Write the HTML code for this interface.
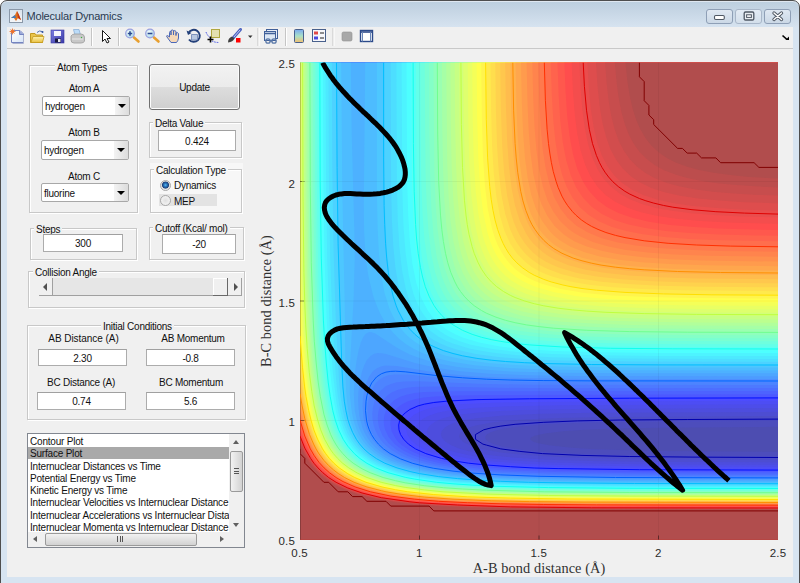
<!DOCTYPE html>
<html><head><meta charset="utf-8">
<style>
*{box-sizing:border-box}
html,body{margin:0;padding:0}
body{width:800px;height:583px;overflow:hidden;position:relative;background:#fff;font-family:"Liberation Sans",sans-serif;font-size:10px;letter-spacing:-0.25px;color:#111}
.abs{position:absolute}
#win{position:absolute;left:0;top:0;width:800px;height:600px;border:1px solid #4e4e4e;box-shadow:inset 0 1px 0 #dfe7f0;border-radius:7px 7px 0 0;background:linear-gradient(#bccfdf 0px,#c4d4e3 8px,#d5e2ef 25px,#d7e4f1 27px,#d7e4f1 600px);overflow:hidden}
#content{position:absolute;left:7px;top:27px;width:786px;height:550px;background:#f0f0f0}
#toolbar{position:absolute;left:0;top:0;width:786px;height:22px;background:#f0f0f0;border-bottom:1px solid #c9c9c9}
.title{position:absolute;left:25.5px;top:9px;font-size:11px;line-height:13px;color:#2a3a50;letter-spacing:-0.2px}
.wbtn{position:absolute;top:9px;height:15px;border:1px solid #8e9fb6;border-radius:3px;background:linear-gradient(#dfe8f2,#cbd8e6)}
.sep{position:absolute;top:28px;width:1px;height:19px;background:#c5c5c5;border-right:1px solid #fff}
.panel{position:absolute;border:1px solid #c8c8c8;box-shadow:inset 1px 1px 0 #fff, 1px 1px 0 #fff}
.ptitle{position:absolute;background:#f0f0f0;padding:0 2px;line-height:12px;margin-top:1px;white-space:nowrap}
.lbl{position:absolute;white-space:nowrap;text-align:center;line-height:12px;margin-top:1px}
.edit{position:absolute;background:#fff;border:1px solid #acacac;border-top-color:#a0a0a0;text-align:center;line-height:15px;padding-top:1px;white-space:nowrap}
.dd{position:absolute;background:#fff;border:1px solid #a8a8a8;border-radius:2px;line-height:19px;padding-left:2px;white-space:nowrap}
.dd .arr{position:absolute;right:0;top:0;width:14px;height:100%;background:linear-gradient(90deg,#f3f3f3,#dcdcdc)}
.dd .arr:after{content:"";position:absolute;left:3px;top:7px;border-left:4px solid transparent;border-right:4px solid transparent;border-top:4px solid #000}
.ytick{position:absolute;right:505px;text-align:right;color:#262626;font-size:11px;line-height:12px}
.xtick{position:absolute;width:40px;text-align:center;color:#262626;font-size:11px;line-height:12px}
</style></head><body>
<div id="win">
  <div class="title">Molecular Dynamics</div>
</div>
<!-- title icon -->
<div class="abs" style="left:9px;top:9px;width:14px;height:14px;border:1px solid #8a98a8;background:linear-gradient(#dbe4ee,#f4f6f8)">
<svg width="12" height="12" viewBox="0 0 12 12" style="position:absolute;left:0;top:0"><path d="M1 8 L5 5 L7 1 L9 5 L11 10 L8 8 L6 11 L4 8 Z" fill="#e0701c"/><path d="M1 8 L5 5 L6 8 L4 8Z" fill="#3d7bbf"/><path d="M7 1 L9 5 L11 10 L8 8Z" fill="#c23616"/></svg>
</div>
<!-- window buttons -->
<div class="wbtn" style="left:706px;width:27px"></div>
<div class="wbtn" style="left:735px;width:27px;border-color:#a9b7c9;background:linear-gradient(#e3ebf4,#d3dfeb)"></div>
<div class="wbtn" style="left:764px;width:27px"></div>
<svg class="abs" style="left:700px;top:0" width="100" height="27" viewBox="700 0 100 27">
<rect x="714.5" y="15.5" width="9.8" height="4" rx="1.2" fill="#fff" stroke="#4f5864" stroke-width="1.1"/>
<rect x="744.2" y="12" width="9.6" height="8" rx="1.3" fill="#e8ecf0" stroke="#4f5864" stroke-width="1.3"/>
<rect x="746.6" y="14.8" width="4.8" height="2.6" fill="#fff" stroke="#4f5864" stroke-width="1"/>
<path d="M774 13L781.5 19.5M781.5 13L774 19.5" stroke="#4f5864" stroke-width="3.4" stroke-linecap="round"/>
<path d="M774 13L781.5 19.5M781.5 13L774 19.5" stroke="#fff" stroke-width="1.4" stroke-linecap="round"/>
</svg>

<div id="content">
  <div id="toolbar"></div>
</div>
<svg class="abs" style="left:0;top:0" width="800" height="50" viewBox="0 0 800 50">
<defs>
<linearGradient id="gpage" x1="0" y1="0" x2="1" y2="1"><stop offset="0" stop-color="#ffffff"/><stop offset="1" stop-color="#d6e4f7"/></linearGradient>
<linearGradient id="gfold" x1="0" y1="0" x2="0" y2="1"><stop offset="0" stop-color="#fff3b0"/><stop offset="1" stop-color="#e9c040"/></linearGradient>
<linearGradient id="gdisk" x1="0" y1="0" x2="1" y2="1"><stop offset="0" stop-color="#7d7fe0"/><stop offset="1" stop-color="#3a3aa8"/></linearGradient>
<linearGradient id="gcbar" x1="0" y1="0" x2="0" y2="1"><stop offset="0" stop-color="#7aa9f0"/><stop offset="0.5" stop-color="#a8e0c8"/><stop offset="1" stop-color="#f3c070"/></linearGradient>
<radialGradient id="glens" cx="0.4" cy="0.4" r="0.6"><stop offset="0" stop-color="#ffffff"/><stop offset="1" stop-color="#a8d8e8"/></radialGradient>
</defs>
<!-- new -->
<path d="M11.5 30.5H20L23.5 34V42.5H11.5Z" fill="url(#gpage)" stroke="#7484c0" stroke-width="1"/>
<path d="M19.5 30.5V34.5H23.5" fill="#9aa8d8" stroke="#7484c0" stroke-width="1"/>
<path d="M23.5 35V43.5H12.5" fill="none" stroke="#aab2d0" stroke-width="1"/>
<circle cx="12.5" cy="31.5" r="2" fill="#f0a040"/><path d="M12.5 28.5V34.5M9.5 31.5H15.5M10.5 29.5L14.5 33.5M14.5 29.5L10.5 33.5" stroke="#e86a30" stroke-width="0.8"/>
<!-- open -->
<path d="M30.5 33.5H35L36 35H42.5V42.5H30.5Z" fill="#e9c44a" stroke="#c49a20" stroke-width="1"/>
<path d="M31 42.5L33 36.5H44L42.5 42.5Z" fill="url(#gfold)" stroke="#c49a20" stroke-width="0.8"/>
<path d="M37 32.5Q39.5 30 42 31.5" fill="none" stroke="#5070b0" stroke-width="1"/><circle cx="42.5" cy="32" r="1" fill="#3050a0"/>
<!-- save -->
<rect x="51" y="30" width="13" height="13" fill="url(#gdisk)" stroke="#3838a0" stroke-width="0.6"/>
<rect x="54" y="31" width="7" height="5" fill="#f4f4fc"/>
<rect x="55" y="38.5" width="6" height="4" fill="#1a1a40"/><rect x="58" y="39" width="2.5" height="3" fill="#e8e8f0"/>
<!-- print -->
<path d="M73.5 29.5H79L80.5 35H75Z" fill="#bcdcf8" stroke="#8ab0d8" stroke-width="0.8"/>
<path d="M71 36Q72 34 75 34H81Q84 34 84.5 37V41Q84 43 81 43H74Q71 43 71 40Z" fill="#c8c8c8" stroke="#9a9a9a" stroke-width="0.8"/>
<path d="M72 39H83" stroke="#e8e8e8" stroke-width="1"/><circle cx="81.5" cy="37.5" r="0.7" fill="#40b040"/>
<!-- separators -->
<path d="M91.5 28V46M118.5 28V46M258 28V46M285.5 28V46M333 28V46" stroke="#c5c5c5" stroke-width="1"/>
<path d="M92.5 28V46M119.5 28V46M259 28V46M286.5 28V46M334 28V46" stroke="#ffffff" stroke-width="1"/>
<!-- arrow cursor -->
<path d="M102.5 30.5V41.5L105 39L107 43L109 42L107 38.5H110.5Z" fill="#ffffff" stroke="#1a1a1a" stroke-width="1" stroke-linejoin="round"/>
<!-- zoom in -->
<path d="M134 37.5L138.5 41.5" stroke="#e8a030" stroke-width="2.6" stroke-linecap="round"/>
<circle cx="130" cy="33.5" r="4.3" fill="url(#glens)" stroke="#9aa0e0" stroke-width="1.2"/>
<path d="M127.8 33.5H132.2M130 31.3V35.7" stroke="#2a4a90" stroke-width="1.6"/>
<!-- zoom out -->
<path d="M154 37.5L158.5 41.5" stroke="#e8a030" stroke-width="2.6" stroke-linecap="round"/>
<circle cx="150" cy="33.5" r="4.3" fill="url(#glens)" stroke="#9aa0e0" stroke-width="1.2"/>
<path d="M147.6 33.5H152.4" stroke="#2a4a90" stroke-width="1.6"/>
<!-- hand -->
<path d="M171 42.5L167 37Q166 35.5 167.5 35.5L169.5 37V32.5Q169.5 31 171 31.5V35V30.5Q172.5 29.5 173.5 30.5V35V31Q175 30 176 31.5V35.5V33Q177.5 32 178.5 33.5V38Q178 41 176.5 42.5Z" fill="#f5d8b8" stroke="#4a68b8" stroke-width="1" stroke-linejoin="round"/>
<!-- rotate 3d -->
<path d="M188.5 33A6 6 0 1 1 189 39.5" fill="none" stroke="#23407a" stroke-width="2"/>
<path d="M186.5 30.5L188 35L191.5 33Z" fill="#23407a"/>
<path d="M191.5 34.5H197.5V40H191.5Z" fill="#b8c8e0" stroke="#6a80b0" stroke-width="0.8"/>
<!-- data cursor -->
<rect x="211.5" y="29.5" width="8" height="8" fill="#e4e0b0" stroke="#b0a840" stroke-width="1"/>
<path d="M206 32Q208 37 211 38M212 41Q215 42.5 219 42.5" fill="none" stroke="#3040e0" stroke-width="0.9" stroke-dasharray="1.5 1"/>
<path d="M210.5 36.5V42.5M207.5 39.5H213.5" stroke="#000" stroke-width="1.6"/>
<!-- brush -->
<path d="M233.5 37.5L240.5 29.5" stroke="#4860c0" stroke-width="3" stroke-linecap="round"/>
<path d="M233.8 37.2L240.2 29.8" stroke="#c8d0f0" stroke-width="1"/>
<path d="M228 42.5Q228 38 232 36.5L234.5 38.5Q233 42 228 42.5Z" fill="#404040"/>
<rect x="236" y="38" width="4.5" height="4.5" fill="#ff0000"/>
<path d="M248 35.5H252.5L250.25 38Z" fill="#303030"/>
<!-- link -->
<rect x="266.5" y="29.5" width="11" height="9" fill="#e8eef8" stroke="#40609a" stroke-width="1"/>
<rect x="264.5" y="31.5" width="11" height="9" fill="#dbe6f4" stroke="#40609a" stroke-width="1"/>
<path d="M264.5 33.5H275.5" stroke="#40609a" stroke-width="1.5"/>
<circle cx="268" cy="41" r="2.2" fill="none" stroke="#5a78a8" stroke-width="1.3"/><circle cx="274" cy="41" r="2.2" fill="none" stroke="#5a78a8" stroke-width="1.3"/><path d="M269.5 41H272.5" stroke="#5a78a8" stroke-width="1.3"/>
<!-- colorbar -->
<rect x="294.5" y="29.5" width="9" height="13" rx="1" fill="url(#gcbar)" stroke="#48608c" stroke-width="1"/>
<!-- legend -->
<rect x="312.5" y="29.5" width="13" height="12" fill="#f6f6fa" stroke="#48608c" stroke-width="1"/>
<rect x="314" y="31.5" width="4" height="3" fill="#e04848"/><rect x="314" y="36.5" width="4" height="3" fill="#4848e0"/>
<path d="M320 33H324M320 38H324" stroke="#202020" stroke-width="1"/>
<!-- gray square -->
<rect x="342" y="32" width="10" height="9" rx="1.5" fill="#a8a8a8" stroke="#909090" stroke-width="0.6"/>
<!-- plot tools -->
<rect x="360.5" y="30.5" width="12" height="11" fill="#ffffff" stroke="#2c4a8a" stroke-width="1.4"/>
<path d="M360.5 32H372.5" stroke="#2c4a8a" stroke-width="1.6"/><path d="M362.5 32V41.5M370.5 32V41.5" stroke="#6a86b8" stroke-width="1"/>
<!-- dock arrow -->
<path d="M782.5 35.5L787 39.5" stroke="#000" stroke-width="1.6"/><path d="M789 36.5V40H785.5Z" fill="#000"/>
</svg>

<!-- Atom Types panel -->
<div class="panel" style="left:29px;top:65px;width:109px;height:148px"></div>
<div class="ptitle" style="left:55px;top:61px">Atom Types</div>
<div class="lbl" style="left:44px;top:82px;width:80px">Atom A</div>
<div class="dd" style="left:42px;top:96px;width:88px;height:20px">hydrogen<div class="arr"></div></div>
<div class="lbl" style="left:44px;top:126px;width:80px">Atom B</div>
<div class="dd" style="left:41px;top:140px;width:88px;height:20px">hydrogen<div class="arr"></div></div>
<div class="lbl" style="left:44px;top:170px;width:80px">Atom C</div>
<div class="dd" style="left:41px;top:183px;width:88px;height:19px">fluorine<div class="arr"></div></div>

<!-- Update button -->
<div class="abs" style="left:149px;top:64px;width:91px;height:46px;border:1px solid #707070;border-radius:3px;background:linear-gradient(#f2f2f2 0%,#ebebeb 50%,#dddddd 50%,#cfcfcf 100%);box-shadow:inset 0 0 0 1px #fcfcfc"></div>
<div class="lbl" style="left:149px;top:81px;width:91px">Update</div>

<!-- Delta Value -->
<div class="panel" style="left:149px;top:122px;width:93px;height:36px"></div>
<div class="ptitle" style="left:153px;top:117px">Delta Value</div>
<div class="edit" style="left:158px;top:130px;width:78px;height:21px;line-height:19px">0.424</div>

<!-- Calculation Type -->
<div class="abs" style="left:150px;top:163px;width:93px;height:51px;background:#f7f7f7"></div>
<div class="panel" style="left:150px;top:169px;width:92px;height:44px"></div>
<div class="ptitle" style="left:154px;top:164px;background:#f7f7f7">Calculation Type</div>
<div class="abs" style="left:159px;top:194px;width:58px;height:12px;background:#e3e3e3"></div>
<div class="abs" style="left:159.5px;top:179.5px;width:11px;height:11px;border-radius:50%;border:1px solid #a8a8a8;background:radial-gradient(circle at 50% 45%,#5cc0f0 0,#2a78c0 1.5px,#1a3f78 3.2px,#d8d8d8 3.8px,#f2f2f2 5px)"></div>
<div class="abs" style="left:159.5px;top:195px;width:11px;height:11px;border-radius:50%;border:1px solid #a8a8a8;background:radial-gradient(circle at 50% 50%,#e0e0e0 0,#f4f4f4 5px)"></div>
<div class="lbl" style="left:174px;top:179px;text-align:left">Dynamics</div>
<div class="lbl" style="left:174px;top:195px;text-align:left">MEP</div>

<!-- Steps -->
<div class="panel" style="left:30px;top:228px;width:107px;height:32px"></div>
<div class="ptitle" style="left:34px;top:223px">Steps</div>
<div class="edit" style="left:43px;top:234px;width:80px;height:18px;line-height:16px">300</div>

<!-- Cutoff -->
<div class="panel" style="left:149px;top:227px;width:95px;height:33px"></div>
<div class="ptitle" style="left:153px;top:222px">Cutoff (Kcal/ mol)</div>
<div class="edit" style="left:162px;top:234px;width:74px;height:20px;line-height:18px">-20</div>

<!-- Collision Angle -->
<div class="panel" style="left:28px;top:271px;width:217px;height:37px"></div>
<div class="ptitle" style="left:33px;top:266px">Collision Angle</div>
<div class="abs" style="left:39px;top:278px;width:203px;height:18px;background:#e6e6e6;border-bottom:1px solid #a0a0a0"></div>
<div class="abs" style="left:39px;top:278px;width:14px;height:18px;background:#f0f0f0;border-right:1px solid #a0a0a0;border-bottom:1px solid #a0a0a0"></div>
<div class="abs" style="left:43px;top:283px;border-top:4px solid transparent;border-bottom:4px solid transparent;border-right:4px solid #505050"></div>
<div class="abs" style="left:213px;top:278px;width:15px;height:18px;background:#f0f0f0;border-right:1px solid #696969;border-bottom:1px solid #696969;box-shadow:inset 1px 1px 0 #fff"></div>
<div class="abs" style="left:228px;top:278px;width:14px;height:18px;background:#f0f0f0;border-right:1px solid #a0a0a0;border-bottom:1px solid #a0a0a0"></div>
<div class="abs" style="left:234px;top:283px;border-top:4px solid transparent;border-bottom:4px solid transparent;border-left:4px solid #505050"></div>

<!-- Initial Conditions -->
<div class="panel" style="left:27px;top:325px;width:219px;height:95px"></div>
<div class="ptitle" style="left:101px;top:320px">Initial Conditions</div>
<div class="lbl" style="left:38.5px;top:332px;width:90px;letter-spacing:-0.05px">AB Distance (A)</div>
<div class="lbl" style="left:148px;top:332px;width:90px">AB Momentum</div>
<div class="edit" style="left:38px;top:349px;width:89px;height:17px">2.30</div>
<div class="edit" style="left:146px;top:349px;width:89px;height:17px">-0.8</div>
<div class="lbl" style="left:36px;top:376px;width:90px">BC Distance (A)</div>
<div class="lbl" style="left:146px;top:376px;width:90px">BC Momentum</div>
<div class="edit" style="left:37px;top:392px;width:89px;height:18px;line-height:16px">0.74</div>
<div class="edit" style="left:146px;top:392px;width:89px;height:18px;line-height:16px">5.6</div>

<!-- Listbox -->
<div class="abs" style="left:27px;top:433px;width:218px;height:115px;background:#fff;border:1px solid #828790;overflow:hidden">
  <div class="abs" style="left:0;top:13px;width:201px;height:12px;background:#a9a9a9"></div>
  <div class="abs" style="left:2px;top:2px;width:199px;overflow:hidden;line-height:12.3px;letter-spacing:-0.2px;white-space:nowrap">Contour Plot<br>Surface Plot<br>Internuclear Distances vs Time<br>Potential Energy vs Time<br>Kinetic Energy vs Time<br>Internuclear Velocities vs Internuclear Distance<br>Internuclear Accelerations vs Internuclear Distance<br>Internuclear Momenta vs Internuclear Distance</div>
  <!-- vscroll -->
  <div class="abs" style="left:201px;top:0;width:15px;height:98px;background:#f0f0f0;border-left:1px solid #f0f0f0"></div>
  <div class="abs" style="left:205px;top:6px;border-left:3.5px solid transparent;border-right:3.5px solid transparent;border-bottom:4px solid #606060"></div>
  <div class="abs" style="left:202px;top:17px;width:13px;height:41px;border:1px solid #9a9a9a;border-radius:2px;background:linear-gradient(90deg,#f2f2f2,#e2e2e2 50%,#d2d2d2)"></div>
  <div class="abs" style="left:206px;top:34px;width:5px;height:6px;border-top:1px solid #555;border-bottom:1px solid #555"><div class="abs" style="left:0;top:1.5px;width:5px;height:1px;background:#555"></div></div>
  <div class="abs" style="left:205px;top:89px;border-left:3.5px solid transparent;border-right:3.5px solid transparent;border-top:4px solid #606060"></div>
  <!-- hscroll -->
  <div class="abs" style="left:0;top:98px;width:216px;height:15px;background:#f0f0f0"></div>
  <div class="abs" style="left:5px;top:102px;border-top:3.5px solid transparent;border-bottom:3.5px solid transparent;border-right:4px solid #606060"></div>
  <div class="abs" style="left:17px;top:99px;width:152px;height:13px;border:1px solid #9a9a9a;border-radius:2px;background:linear-gradient(#f2f2f2,#e2e2e2 50%,#d2d2d2)"></div>
  <div class="abs" style="left:89px;top:102px;width:6px;height:6px;border-left:1px solid #555;border-right:1px solid #555"><div class="abs" style="left:1.5px;top:0;width:1px;height:6px;background:#555"></div></div>
  <div class="abs" style="left:192px;top:102px;border-top:3.5px solid transparent;border-bottom:3.5px solid transparent;border-left:4px solid #606060"></div>
</div>

<svg class="abs" style="left:0;top:0" width="800" height="583" viewBox="0 0 800 583">
<defs><clipPath id="pc"><rect x="300" y="62.5" width="478" height="477"/></clipPath></defs>
<g clip-path="url(#pc)">
<rect x="300" y="62.5" width="478" height="477" fill="#4d4db1"/>
<path fill="#4d4dbc" fill-rule="evenodd" d="M301.2 539.5 778.0 539.5 778.0 451.8 662.1 451.0 620.2 450.1 590.1 448.9 568.9 447.5 549.0 445.3 537.1 442.9 533.6 441.7 531.4 440.5 530.3 439.3 530.5 438.1 531.8 436.9 534.5 435.8 544.8 433.4 562.9 431.3 584.9 429.8 616.3 428.6 657.3 427.8 778.0 426.8 778.0 62.5 300.0 62.5 300.0 539.5 301.2 539.5Z"/>
<path fill="#4d4dc7" fill-rule="evenodd" d="M301.2 539.5 778.0 539.5 778.0 456.4 628.6 455.3 583.2 454.1 549.2 452.4 523.1 450.1 501.9 446.5 493.7 444.1 488.5 441.7 485.7 439.3 485.0 436.9 486.6 434.6 490.7 432.2 497.2 430.1 503.8 428.6 522.3 426.1 549.8 424.0 586.4 422.6 631.0 421.8 778.0 420.9 778.0 62.5 300.0 62.5 300.0 539.5 301.2 539.5Z"/>
<path fill="#4d4dd2" fill-rule="evenodd" d="M301.2 539.5 778.0 539.5 778.0 459.7 678.8 459.3 610.7 458.6 562.3 457.2 528.2 455.3 500.7 452.4 486.7 450.1 476.8 447.7 469.8 445.3 463.0 441.7 460.4 439.3 459.2 436.9 459.0 435.8 459.8 433.4 460.7 432.2 463.7 429.8 468.9 427.4 475.7 425.4 494.8 422.0 522.3 419.6 559.3 418.0 608.3 417.0 778.0 416.0 778.0 62.5 300.0 62.5 300.0 539.5 301.2 539.5Z"/>
<path fill="#4d4dde" fill-rule="evenodd" d="M301.2 539.5 778.0 539.5 778.0 462.4 666.9 462.0 599.9 461.3 548.6 459.8 512.7 457.6 497.0 456.0 480.4 453.7 468.8 451.3 460.2 448.9 451.2 445.3 445.5 441.7 442.1 438.1 440.8 434.6 441.7 431.0 444.9 427.4 449.4 424.8 456.5 422.1 464.9 420.0 475.7 418.2 503.1 415.5 540.2 413.8 591.6 412.8 778.0 411.8 778.0 62.5 300.0 62.5 300.0 539.5 301.2 539.5Z"/>
<path fill="#4d4de9" fill-rule="evenodd" d="M301.2 539.5 778.0 539.5 778.0 464.8 660.9 464.4 590.4 463.6 537.8 462.0 501.1 459.6 484.0 457.7 469.7 455.5 456.5 452.6 447.0 449.7 439.5 446.5 432.1 441.7 428.1 436.9 427.1 434.6 426.8 432.2 427.7 428.6 430.4 425.0 435.5 421.4 442.2 418.6 449.4 416.5 460.1 414.5 486.4 411.7 523.5 410.0 576.0 408.9 778.0 407.9 778.0 62.5 300.0 62.5 300.0 539.5 301.2 539.5Z"/>
<path fill="#4d4df4" fill-rule="evenodd" d="M301.2 539.5 778.0 539.5 778.0 466.9 656.1 466.5 579.6 465.6 528.2 463.9 490.0 461.2 473.3 459.2 457.7 456.5 445.9 453.6 435.4 450.1 428.0 446.5 421.4 441.7 417.4 436.9 415.9 433.6 415.5 431.0 416.3 426.2 418.5 422.6 422.5 419.1 429.3 415.5 437.4 412.8 447.0 410.8 472.1 408.0 507.9 406.3 561.7 405.2 778.0 404.3 778.0 62.5 300.0 62.5 300.0 539.5 301.2 539.5Z"/>
<path fill="#4d4dff" fill-rule="evenodd" d="M301.2 539.5 778.0 539.5 778.0 468.8 651.3 468.4 576.0 467.5 519.9 465.6 481.6 462.8 464.9 460.6 448.2 457.5 435.0 453.9 425.5 450.2 416.8 445.3 411.3 440.5 407.3 434.6 405.9 428.6 406.6 423.8 409.3 419.1 413.5 415.1 419.1 411.9 425.5 409.5 435.0 407.1 445.8 405.5 458.9 404.2 492.4 402.7 546.2 401.7 778.0 400.8 778.0 62.5 300.0 62.5 300.0 539.5 301.2 539.5Z"/>
<path fill="#4d58ff" fill-rule="evenodd" d="M301.2 539.5 778.0 539.5 778.0 470.5 647.7 470.1 567.7 469.1 512.7 467.2 473.3 464.1 455.3 461.5 440.0 458.4 427.8 454.8 417.1 450.3 408.9 445.3 402.7 439.3 399.1 433.4 398.0 429.8 397.6 426.2 398.2 421.4 400.4 416.6 404.5 411.9 409.9 408.3 415.9 405.7 424.3 403.4 435.0 401.6 447.0 400.4 476.9 399.1 527.1 398.3 778.0 397.5 778.0 62.5 300.0 62.5 300.0 539.5 301.2 539.5Z"/>
<path fill="#4d63ff" fill-rule="evenodd" d="M301.2 539.5 778.0 539.5 778.0 472.1 639.4 471.7 561.7 470.7 506.7 468.7 484.0 467.1 466.1 465.3 449.4 462.8 433.8 459.5 420.7 455.4 409.9 450.5 401.6 444.9 398.1 441.7 395.2 438.1 391.5 431.0 390.3 423.8 391.0 417.9 393.0 413.1 396.7 408.3 401.6 404.5 407.5 401.5 414.7 399.3 423.7 397.6 435.0 396.4 456.5 395.4 491.2 395.0 778.0 394.3 778.0 62.5 300.0 62.5 300.0 539.5 301.2 539.5Z"/>
<path fill="#4d6eff" fill-rule="evenodd" d="M301.2 539.5 778.0 539.5 778.0 473.6 635.8 473.2 555.7 472.1 500.8 470.0 478.1 468.4 458.9 466.3 439.9 463.2 425.1 459.6 412.3 455.1 402.8 450.2 394.6 444.1 388.6 436.9 385.1 429.8 384.2 426.2 383.7 421.4 384.3 415.5 386.3 409.5 389.6 404.4 394.4 400.0 400.4 396.7 406.4 394.7 414.7 393.0 424.3 392.0 455.3 391.2 778.0 391.1 778.0 62.5 300.0 62.5 300.0 539.5 301.2 539.5Z"/>
<path fill="#4d79ff" fill-rule="evenodd" d="M301.2 539.5 778.0 539.5 778.0 475.0 632.2 474.5 549.8 473.4 493.6 471.2 469.7 469.3 451.8 467.1 435.0 464.2 419.5 460.3 407.5 455.9 396.7 450.1 388.4 443.3 382.6 435.8 379.1 427.4 378.1 422.6 377.8 417.9 378.3 411.9 380.1 405.8 383.2 400.0 387.2 395.6 392.0 392.3 398.0 389.8 405.2 388.1 413.5 387.1 433.8 386.6 498.4 387.8 555.7 388.2 778.0 388.1 778.0 62.5 300.0 62.5 300.0 539.5 301.2 539.5Z"/>
<path fill="#4d84ff" fill-rule="evenodd" d="M301.2 539.5 778.0 539.5 778.0 476.3 628.6 475.9 545.0 474.7 487.6 472.3 464.1 470.3 445.4 467.9 427.9 464.6 413.8 460.8 401.6 455.9 390.8 449.6 383.2 442.9 380.3 439.3 377.3 434.6 375.1 429.8 373.6 425.0 372.7 420.2 372.3 414.3 373.0 407.1 374.9 400.0 377.7 394.4 381.3 389.9 386.0 386.1 390.8 383.9 396.8 382.2 404.0 381.4 418.3 381.2 478.1 383.8 533.0 384.8 778.0 385.1 778.0 62.5 300.0 62.5 300.0 539.5 301.2 539.5Z"/>
<path fill="#4d8fff" fill-rule="evenodd" d="M301.2 539.5 778.0 539.5 778.0 477.5 626.2 477.1 541.4 475.9 510.3 474.9 482.8 473.4 461.0 471.5 441.0 468.9 423.7 465.6 407.4 460.8 394.4 455.0 385.1 448.9 377.7 441.5 374.4 436.9 371.8 432.2 369.9 427.4 368.3 421.4 367.3 410.7 367.7 403.6 369.3 395.8 371.8 389.2 375.3 383.5 378.9 379.9 383.7 376.9 388.4 375.3 394.4 374.4 407.5 374.6 443.4 377.9 467.3 379.6 517.5 381.4 596.4 382.1 778.0 382.1 778.0 62.5 300.0 62.5 300.0 539.5 301.2 539.5Z"/>
<path fill="#4d9bff" fill-rule="evenodd" d="M301.2 539.5 778.0 539.5 778.0 478.7 619.1 478.3 533.0 477.0 500.8 475.8 473.3 474.1 450.6 471.8 432.8 469.1 416.5 465.6 401.6 460.8 389.3 454.8 383.9 451.3 379.5 447.7 375.9 444.1 372.0 439.3 369.1 434.6 366.8 429.8 364.8 423.8 363.5 417.9 362.5 405.9 363.0 397.6 364.4 389.2 366.6 382.1 369.3 376.2 372.9 371.3 376.5 368.4 381.3 366.3 386.0 365.5 396.8 366.1 429.1 371.6 450.6 374.3 475.7 376.4 504.3 377.7 586.8 379.0 778.0 379.1 778.0 62.5 300.0 62.5 300.0 539.5 301.2 539.5Z"/>
<path fill="#4da6ff" fill-rule="evenodd" d="M301.2 539.5 778.0 539.5 778.0 479.8 616.7 479.4 529.4 478.1 497.2 476.9 469.7 475.1 447.0 472.8 429.1 470.0 410.0 465.6 396.5 460.8 384.9 454.8 379.8 451.3 375.3 447.4 371.1 442.9 367.6 438.1 364.8 433.4 362.3 427.4 359.2 415.5 358.1 401.2 358.4 391.6 359.8 381.3 361.7 372.5 364.1 365.4 366.9 360.0 370.5 355.9 374.1 353.8 377.7 353.1 381.3 353.2 386.0 354.0 415.0 363.0 435.9 367.8 460.1 371.3 490.0 373.7 527.1 375.2 576.0 375.9 778.0 376.2 778.0 62.5 300.0 62.5 300.0 539.5 301.2 539.5Z"/>
<path fill="#4db1ff" fill-rule="evenodd" d="M301.2 539.5 778.0 539.5 778.0 480.9 611.9 480.5 523.5 479.1 490.0 477.7 464.9 476.0 442.2 473.5 423.0 470.3 404.3 465.6 390.8 460.4 384.7 457.2 379.1 453.6 374.5 450.1 369.6 445.3 365.8 440.5 362.8 435.8 359.8 429.8 357.7 423.8 354.8 410.7 353.8 394.0 355.0 372.3 356.6 360.6 358.7 349.9 360.9 342.2 363.3 336.9 365.7 333.8 369.3 332.1 371.7 332.2 375.3 333.6 392.7 345.1 400.4 349.7 409.9 354.4 419.5 358.1 431.5 361.8 443.4 364.5 457.7 366.9 473.3 368.8 510.3 371.4 561.7 372.8 633.4 373.3 778.0 373.3 778.0 62.5 300.0 62.5 300.0 539.5 301.2 539.5Z"/>
<path fill="#4dbcff" fill-rule="evenodd" d="M301.2 539.5 778.0 539.5 778.0 482.0 646.5 481.7 567.1 481.1 511.5 479.8 468.5 477.5 450.6 475.8 433.8 473.6 419.5 471.1 406.6 467.9 395.7 464.4 386.0 460.1 377.7 455.2 371.1 450.1 366.3 445.3 362.6 440.5 359.0 434.6 356.2 428.4 353.8 421.4 351.9 413.1 349.9 395.2 349.9 367.8 353.6 298.6 354.7 259.3 354.4 233.0 351.7 134.0 350.8 62.5 300.0 62.5 300.0 539.5 301.2 539.5ZM599.9 370.2 778.0 370.4 778.0 62.5 365.2 62.5 363.8 205.6 364.1 230.6 365.3 252.1 366.6 264.0 368.6 277.1 373.3 296.2 376.3 304.6 379.9 312.9 383.8 320.1 388.6 327.2 393.6 333.2 399.7 339.2 405.8 343.9 413.5 348.7 421.9 352.8 430.3 356.0 439.8 358.9 450.6 361.4 474.5 365.2 505.5 367.8 545.0 369.4 599.9 370.2Z"/>
<path fill="#4dc7ff" fill-rule="evenodd" d="M301.2 539.5 778.0 539.5 778.0 483.0 645.4 482.7 566.5 482.1 510.3 480.8 467.3 478.5 448.2 476.8 432.6 474.8 418.3 472.2 405.4 469.1 394.3 465.6 384.8 461.5 376.5 456.8 369.1 451.3 364.3 446.5 359.8 440.7 356.0 434.6 353.3 428.6 350.8 421.4 348.8 413.1 347.3 403.6 346.2 392.8 345.4 372.5 344.8 309.3 342.3 191.3 341.2 62.5 300.0 62.5 300.0 539.5 301.2 539.5ZM558.1 366.6 632.2 367.4 778.0 367.6 778.0 62.5 376.9 62.5 376.9 193.7 377.6 227.1 378.9 253.3 381.2 274.8 384.5 292.7 389.3 308.2 392.5 315.3 395.7 321.3 399.8 327.2 404.8 333.2 409.9 338.0 415.9 342.6 422.0 346.3 429.2 349.9 437.4 353.1 445.8 355.7 466.1 360.1 490.0 363.2 519.9 365.3 558.1 366.6Z"/>
<path fill="#4dd2ff" fill-rule="evenodd" d="M301.2 539.5 778.0 539.5 778.0 483.9 641.8 483.7 562.9 483.0 506.7 481.7 464.9 479.4 445.8 477.7 430.3 475.6 415.9 473.1 404.0 470.2 393.0 466.8 382.5 462.3 373.7 457.2 366.9 452.1 362.1 447.4 357.4 441.4 353.3 434.6 350.1 427.4 347.7 420.2 345.5 410.7 343.8 400.0 342.6 388.1 340.7 348.7 337.5 236.6 336.4 163.9 335.8 62.5 300.0 62.5 300.0 539.5 301.2 539.5ZM595.2 364.2 778.0 364.7 778.0 62.5 384.4 62.5 384.7 192.5 385.6 227.1 387.2 254.5 390.1 278.3 393.9 296.2 396.6 304.6 399.6 311.7 402.6 317.7 406.4 323.7 411.2 329.6 416.0 334.4 421.9 339.2 429.1 343.7 436.2 347.2 444.6 350.5 462.5 355.4 485.2 359.1 512.7 361.6 548.6 363.3 595.2 364.2Z"/>
<path fill="#4ddeff" fill-rule="evenodd" d="M301.2 539.5 778.0 539.5 778.0 484.9 641.8 484.6 560.5 483.9 503.2 482.6 462.5 480.3 444.6 478.7 426.8 476.3 413.5 473.9 400.4 470.6 388.8 466.8 380.1 462.9 372.2 458.4 364.4 452.4 358.6 446.5 354.1 440.5 350.2 433.6 347.1 426.2 344.5 417.9 342.3 408.3 340.6 397.2 339.2 383.3 335.9 322.7 333.5 248.8 332.3 169.8 331.8 62.5 300.0 62.5 300.0 539.5 301.2 539.5ZM562.9 360.6 635.8 361.6 778.0 361.8 778.0 62.5 390.7 62.5 391.1 185.3 391.9 219.9 393.3 246.1 395.4 267.6 398.7 286.7 403.2 302.2 406.2 309.3 409.2 315.3 413.0 321.3 417.8 327.2 422.7 332.0 427.9 336.2 434.4 340.4 441.0 343.8 448.2 346.7 456.5 349.5 475.7 353.9 498.4 357.0 527.1 359.2 562.9 360.6Z"/>
<path fill="#4de9ff" fill-rule="evenodd" d="M301.2 539.5 778.0 539.5 778.0 485.8 639.4 485.5 558.1 484.8 501.2 483.5 460.1 481.2 426.7 477.4 412.3 474.9 398.7 471.5 387.8 467.9 378.9 464.1 370.5 459.3 362.9 453.6 356.9 447.7 351.6 440.5 347.6 433.4 344.2 425.0 341.7 416.7 339.4 405.9 337.4 392.8 335.9 377.6 332.3 318.9 330.1 254.5 328.9 175.8 328.4 62.5 300.0 62.5 300.0 539.5 301.2 539.5ZM594.0 358.3 659.7 358.8 778.0 358.9 778.0 62.5 396.4 62.5 396.9 186.5 397.8 221.1 399.4 247.3 402.0 270.0 405.8 289.1 408.4 297.4 411.1 304.6 417.5 316.5 421.9 322.5 426.7 327.6 431.8 332.0 438.6 336.7 445.5 340.4 453.0 343.5 470.1 348.7 491.2 352.6 517.5 355.3 551.0 357.2 594.0 358.3Z"/>
<path fill="#4df4ff" fill-rule="evenodd" d="M301.2 539.5 778.0 539.5 778.0 486.6 640.6 486.4 560.5 485.8 503.2 484.5 460.1 482.2 441.0 480.4 425.5 478.4 411.1 475.8 398.0 472.7 387.1 469.1 376.1 464.4 367.9 459.6 360.2 453.6 354.4 447.7 349.2 440.5 345.3 433.4 341.5 423.8 338.8 414.3 336.4 402.4 332.8 372.5 329.4 321.3 327.2 259.3 326.1 182.9 325.5 62.5 300.0 62.5 300.0 539.5 301.2 539.5ZM656.1 355.9 778.0 356.0 778.0 62.5 401.6 62.5 402.3 188.9 403.4 224.7 405.5 252.1 408.7 274.8 410.7 284.3 413.5 293.8 416.2 301.0 419.6 308.2 423.2 314.1 427.9 320.3 433.5 326.0 439.4 330.8 445.8 334.9 453.0 338.5 461.3 341.8 470.9 344.7 492.4 349.1 518.7 352.1 552.1 354.1 595.2 355.3 656.1 355.9Z"/>
<path fill="#4dffff" fill-rule="evenodd" d="M301.2 539.5 778.0 539.5 778.0 487.5 637.0 487.2 556.9 486.6 499.6 485.2 457.7 482.9 438.1 481.1 421.9 478.9 407.9 476.3 395.6 473.3 384.8 469.7 375.2 465.6 366.8 460.8 358.9 454.8 353.0 448.9 347.7 441.7 343.1 433.4 339.3 423.8 336.3 413.1 333.9 401.2 331.8 386.9 330.0 369.0 326.6 317.7 324.5 258.1 323.4 181.8 322.9 62.5 300.0 62.5 300.0 539.5 301.2 539.5ZM596.4 352.3 662.1 353.0 778.0 353.1 778.0 62.5 406.5 62.5 407.1 180.6 408.2 215.1 409.8 241.4 412.4 264.0 416.3 283.1 421.5 298.6 427.8 310.5 432.2 316.5 436.5 321.3 442.0 326.0 448.2 330.4 455.3 334.3 462.5 337.4 479.2 342.6 499.6 346.5 524.7 349.3 555.7 351.1 596.4 352.3Z"/>
<path fill="#58fff4" fill-rule="evenodd" d="M301.2 539.5 778.0 539.5 778.0 488.3 637.0 488.1 554.5 487.4 497.2 486.0 455.3 483.7 438.6 482.1 421.5 479.9 407.5 477.4 393.6 473.9 382.5 470.2 372.1 465.6 364.1 460.8 356.5 454.8 350.7 448.9 345.4 441.6 341.0 433.4 337.0 423.3 334.2 413.1 331.5 400.0 329.5 385.7 327.5 367.1 324.1 317.7 322.1 259.3 321.1 182.9 320.6 62.5 300.0 62.5 300.0 539.5 301.2 539.5ZM645.4 349.9 778.0 350.2 778.0 62.5 411.3 62.5 412.0 182.9 413.2 217.5 415.2 245.0 418.3 267.6 422.6 285.5 425.6 293.8 428.8 301.0 432.3 307.0 436.5 312.9 441.0 317.9 447.0 323.2 453.0 327.4 460.1 331.3 468.5 334.9 476.9 337.7 497.2 342.4 521.1 345.5 552.1 347.8 591.6 349.2 645.4 349.9Z"/>
<path fill="#63ffe9" fill-rule="evenodd" d="M301.2 539.5 778.0 539.5 778.0 489.1 637.0 488.9 555.0 488.2 499.6 486.9 456.1 484.6 437.4 482.9 420.7 480.8 406.4 478.2 393.2 475.0 382.4 471.5 371.4 466.8 363.2 462.0 355.4 456.0 349.0 449.5 343.4 441.7 339.0 433.4 335.2 423.8 332.2 413.1 329.5 400.0 327.2 384.5 325.2 365.4 321.9 317.7 320.0 260.5 318.9 185.3 318.5 62.5 300.0 62.5 300.0 539.5 301.2 539.5ZM601.1 346.3 665.7 347.1 778.0 347.3 778.0 62.5 415.9 62.5 416.6 175.8 417.6 210.4 419.4 236.6 422.1 259.3 425.8 277.1 431.0 292.7 437.3 304.6 441.7 310.5 446.1 315.3 451.5 320.1 457.7 324.5 463.7 327.8 470.9 331.0 487.6 336.4 507.8 340.4 531.8 343.1 561.7 345.1 601.1 346.3Z"/>
<path fill="#6effde" fill-rule="evenodd" d="M301.2 539.5 778.0 539.5 778.0 489.9 634.6 489.6 554.5 489.0 497.2 487.7 454.2 485.4 433.9 483.5 418.3 481.4 403.6 478.7 390.8 475.5 380.1 471.9 370.5 467.8 360.9 462.2 353.8 456.6 348.4 451.3 343.7 445.3 339.4 438.1 335.9 430.6 332.6 421.4 330.0 411.9 325.7 388.1 323.3 366.6 321.3 341.5 319.6 311.7 318.4 278.3 317.0 196.1 316.5 62.5 300.0 62.5 300.0 539.5 301.2 539.5ZM648.9 343.9 778.0 344.3 778.0 62.5 420.3 62.5 420.6 132.9 421.2 179.4 422.5 213.9 424.5 240.2 427.8 262.8 432.3 280.7 434.9 287.9 438.1 295.0 441.6 301.0 445.8 307.0 450.1 311.7 455.4 316.5 461.3 320.8 468.5 324.9 475.7 328.1 484.0 331.1 493.6 333.7 504.3 336.0 528.2 339.4 558.1 341.7 596.4 343.1 648.9 343.9Z"/>
<path fill="#79ffd2" fill-rule="evenodd" d="M301.2 539.5 778.0 539.5 778.0 490.6 633.4 490.4 551.0 489.7 492.4 488.3 451.8 486.0 435.0 484.5 417.9 482.3 404.0 479.8 389.7 476.3 378.9 472.7 368.0 467.9 359.9 463.2 352.2 457.2 346.6 451.6 341.8 445.3 337.5 438.1 333.7 429.8 330.8 421.4 327.9 410.7 323.6 385.7 321.2 364.2 319.1 338.2 316.5 278.3 315.2 198.4 314.7 62.5 300.0 62.5 300.0 539.5 301.2 539.5ZM610.7 340.4 672.8 341.1 778.0 341.3 778.0 62.5 424.7 62.5 425.5 172.2 426.7 205.6 428.5 231.8 431.3 254.5 435.2 272.4 440.1 286.7 443.4 293.5 447.0 299.4 451.8 305.7 456.5 310.5 461.3 314.6 467.3 318.7 473.3 322.0 480.4 325.2 497.2 330.5 517.2 334.4 541.4 337.2 571.3 339.1 610.7 340.4Z"/>
<path fill="#84ffc7" fill-rule="evenodd" d="M301.2 539.5 778.0 539.5 778.0 491.4 634.6 491.1 552.1 490.5 494.8 489.2 450.6 486.8 430.3 484.8 414.7 482.7 399.7 479.9 387.2 476.7 375.7 472.7 365.7 468.1 357.5 463.2 350.2 457.3 344.3 451.3 339.9 445.3 335.7 438.1 331.9 429.8 328.7 420.3 326.2 410.7 323.8 398.8 321.5 383.3 319.1 361.4 317.2 336.8 314.7 276.0 313.4 194.9 312.9 62.5 300.0 62.5 300.0 539.5 301.2 539.5ZM663.3 338.0 778.0 338.3 778.0 62.5 429.1 62.5 429.3 130.5 430.1 175.8 431.4 209.2 433.5 235.4 436.9 258.1 441.6 276.0 444.3 283.1 447.7 290.3 451.3 296.2 455.8 302.2 460.3 307.0 466.1 311.9 473.1 316.5 480.0 320.1 487.6 323.2 496.3 326.0 516.3 330.5 540.2 333.6 571.3 335.9 610.7 337.2 663.3 338.0Z"/>
<path fill="#8fffbc" fill-rule="evenodd" d="M301.2 539.5 778.0 539.5 778.0 492.1 631.0 491.9 549.8 491.2 491.2 489.8 449.4 487.5 431.5 485.8 413.8 483.5 400.4 481.0 386.3 477.5 375.3 473.8 365.0 469.1 357.0 464.4 349.3 458.4 343.4 452.4 338.0 445.3 333.5 437.2 329.9 428.9 326.7 419.1 323.9 407.9 321.5 395.0 319.4 379.7 317.2 359.4 315.5 335.6 313.0 276.0 311.8 197.3 311.3 62.5 300.0 62.5 300.0 539.5 301.2 539.5ZM626.2 334.4 684.8 335.0 778.0 335.3 778.0 62.5 433.4 62.5 434.3 169.8 435.5 202.0 437.4 228.3 440.3 249.7 444.3 267.6 449.5 281.9 453.0 288.7 456.5 294.4 460.8 299.8 465.5 304.6 470.9 309.1 476.9 313.0 483.3 316.5 491.2 319.8 507.9 324.8 528.2 328.6 553.3 331.4 584.4 333.2 626.2 334.4Z"/>
<path fill="#9bffb1" fill-rule="evenodd" d="M301.2 539.5 778.0 539.5 778.0 492.8 632.2 492.6 548.6 491.9 492.3 490.6 448.5 488.2 430.3 486.5 413.5 484.3 399.2 481.7 386.0 478.4 375.3 474.9 364.5 470.2 355.0 464.6 347.8 458.9 341.8 452.8 337.0 446.4 332.3 438.2 328.6 429.8 325.1 419.2 322.4 408.3 319.9 395.2 317.8 379.7 315.5 358.4 313.8 334.4 311.4 276.0 310.2 196.1 309.7 62.5 300.0 62.5 300.0 539.5 301.2 539.5ZM699.1 332.0 778.0 332.2 778.0 62.5 437.6 62.5 438.0 129.3 438.8 174.6 440.3 208.0 442.8 234.2 446.4 255.7 448.9 265.2 451.7 273.6 454.8 280.7 458.7 287.9 462.8 293.8 467.3 299.0 473.3 304.5 479.2 308.7 486.4 312.8 493.6 316.0 502.0 318.9 511.5 321.6 533.0 325.6 559.8 328.4 594.0 330.3 638.2 331.5 699.1 332.0Z"/>
<path fill="#a6ffa6" fill-rule="evenodd" d="M301.2 539.5 778.0 539.5 778.0 493.5 632.2 493.3 549.8 492.6 491.2 491.3 448.2 489.0 427.9 487.1 411.1 484.8 396.8 482.1 383.7 478.8 372.9 475.1 362.3 470.3 354.3 465.6 346.6 459.6 340.8 453.6 335.4 446.5 330.6 438.1 326.6 428.6 323.2 417.9 320.4 405.9 317.9 392.1 315.8 376.1 313.7 354.7 312.0 329.6 309.8 272.4 308.7 193.7 308.3 62.5 300.0 62.5 300.0 539.5 301.2 539.5ZM650.1 328.4 778.0 329.1 778.0 62.5 441.9 62.5 442.2 124.5 443.0 167.4 444.3 199.6 446.4 225.9 449.6 247.3 454.2 265.2 456.8 272.4 460.1 279.5 463.5 285.5 467.3 290.9 472.0 296.2 476.9 300.7 482.8 305.1 488.8 308.6 496.0 312.0 504.3 315.2 522.3 319.8 543.8 323.3 571.3 325.8 604.7 327.4 650.1 328.4Z"/>
<path fill="#b1ff9b" fill-rule="evenodd" d="M301.2 539.5 778.0 539.5 778.0 494.2 629.8 493.9 546.2 493.3 487.6 491.9 445.8 489.5 427.9 487.8 411.1 485.6 396.8 483.0 383.6 479.8 372.9 476.2 362.2 471.5 353.8 466.7 345.4 460.2 339.0 453.6 333.7 446.5 329.1 438.1 325.1 428.7 321.7 417.9 319.1 407.0 316.6 392.8 314.3 376.1 312.2 354.7 310.6 332.0 308.4 272.9 307.3 193.7 306.9 62.5 300.0 62.5 300.0 539.5 301.2 539.5ZM631.0 324.9 688.4 325.6 778.0 325.9 778.0 62.5 446.2 62.5 447.2 162.7 448.5 194.9 450.4 219.9 453.4 241.4 457.6 259.3 463.0 273.6 469.7 285.1 473.7 290.3 478.4 295.0 484.0 299.7 489.5 303.4 496.0 306.9 503.2 310.0 519.9 315.2 539.2 318.9 562.9 321.7 592.8 323.6 631.0 324.9Z"/>
<path fill="#bcff8f" fill-rule="evenodd" d="M301.2 539.5 778.0 539.5 778.0 494.8 629.8 494.6 547.4 494.0 488.8 492.6 445.8 490.3 425.5 488.3 408.7 486.1 394.8 483.5 381.3 480.0 370.3 476.3 359.8 471.5 351.8 466.8 344.2 460.8 338.2 454.7 332.3 446.7 327.5 438.1 323.9 429.4 320.3 418.1 317.5 405.9 314.8 390.4 312.6 373.7 310.8 354.1 309.1 329.6 307.0 272.4 305.9 194.9 305.5 62.5 300.0 62.5 300.0 539.5 301.2 539.5ZM701.5 322.5 778.0 322.7 778.0 62.5 450.4 62.5 450.8 124.5 451.7 167.4 453.3 199.6 455.6 224.7 459.3 246.1 461.8 255.7 464.6 264.0 467.7 271.2 471.6 278.3 475.7 284.1 479.9 289.1 485.2 294.0 491.2 298.5 497.5 302.2 505.0 305.8 512.7 308.6 522.3 311.4 543.8 315.7 570.1 318.7 602.3 320.6 644.2 321.8 701.5 322.5Z"/>
<path fill="#c7ff84" fill-rule="evenodd" d="M301.2 539.5 778.0 539.5 778.0 495.5 629.8 495.2 545.0 494.6 485.2 493.2 443.4 490.8 425.5 489.1 408.7 486.9 393.2 484.0 380.1 480.6 368.1 476.5 358.6 472.1 349.8 466.8 342.4 460.8 335.9 453.8 330.6 446.5 326.1 438.1 321.8 427.4 318.3 415.5 315.5 403.1 313.1 388.1 310.9 370.2 307.6 326.0 305.6 270.0 304.6 193.7 304.2 62.5 300.0 62.5 300.0 539.5 301.2 539.5ZM669.3 318.9 778.0 319.4 778.0 62.5 454.7 62.5 455.1 122.1 456.0 163.9 457.4 194.9 459.8 219.9 463.3 241.4 468.0 258.1 473.7 271.2 477.3 277.1 481.6 282.9 486.4 288.0 491.9 292.7 497.2 296.3 504.3 300.2 511.6 303.4 519.9 306.3 537.8 310.7 560.5 314.1 588.0 316.4 622.7 318.0 669.3 318.9Z"/>
<path fill="#d2ff79" fill-rule="evenodd" d="M301.2 539.5 778.0 539.5 778.0 496.1 631.0 495.9 547.4 495.3 488.8 494.0 444.6 491.6 424.3 489.7 407.5 487.5 392.4 484.6 380.1 481.5 368.1 477.5 357.6 472.7 349.6 467.9 341.8 461.9 335.1 454.8 329.9 447.7 325.1 439.1 320.8 428.6 317.2 416.7 314.3 403.7 311.9 389.2 309.6 370.1 306.3 326.0 304.4 270.0 303.4 193.7 303.0 62.5 300.0 62.5 300.0 539.5 301.2 539.5ZM654.9 315.3 778.0 316.1 778.0 62.5 459.0 62.5 459.4 119.7 460.2 159.1 461.7 190.1 463.8 213.9 466.9 234.2 471.0 250.9 476.7 265.2 480.0 271.2 484.1 277.1 488.8 282.7 493.6 287.1 499.3 291.5 505.1 295.0 518.7 301.1 536.6 306.2 556.9 309.7 583.2 312.5 614.3 314.2 654.9 315.3Z"/>
<path fill="#deff6e" fill-rule="evenodd" d="M301.2 539.5 778.0 539.5 778.0 496.7 627.4 496.5 542.6 495.8 482.8 494.4 441.0 492.0 423.1 490.3 406.4 488.0 390.8 485.1 377.7 481.7 365.7 477.6 356.2 473.1 347.7 467.9 340.2 462.0 333.5 454.8 328.4 447.7 323.8 439.3 319.5 428.6 315.9 416.7 313.0 403.6 310.5 388.1 308.2 369.0 305.4 332.0 303.5 285.5 302.3 205.6 301.8 62.5 300.0 62.5 300.0 539.5 301.2 539.5ZM648.9 311.7 700.3 312.5 778.0 312.8 778.0 62.5 463.3 62.5 463.7 116.2 464.6 155.5 466.0 186.5 468.1 210.4 471.2 230.6 475.3 247.3 481.0 261.6 487.6 272.7 492.3 278.3 497.2 283.1 502.0 286.9 507.9 290.7 521.1 297.0 537.8 302.1 557.1 305.8 582.0 308.6 611.9 310.5 648.9 311.7Z"/>
<path fill="#e9ff63" fill-rule="evenodd" d="M301.2 539.5 778.0 539.5 778.0 497.3 628.6 497.1 545.0 496.5 486.4 495.2 442.2 492.8 421.9 490.9 405.2 488.6 390.3 485.8 377.7 482.6 366.0 478.7 355.6 473.9 347.6 469.1 339.4 462.8 333.0 456.0 327.0 447.7 322.5 439.3 318.2 428.6 314.7 416.7 311.8 403.6 309.1 386.9 306.8 367.8 303.9 327.2 302.1 276.0 301.1 198.4 300.7 62.5 300.0 62.5 300.0 539.5 301.2 539.5ZM776.8 309.3 778.0 309.4 778.0 62.5 467.7 62.5 468.3 123.3 469.4 165.1 471.4 196.1 474.5 221.1 476.6 231.8 479.0 241.4 481.8 249.7 485.3 258.1 489.3 265.2 493.6 271.3 498.9 277.1 504.3 281.9 510.3 286.1 517.5 290.1 525.9 293.7 534.2 296.5 554.5 301.2 579.6 304.6 609.5 306.8 648.9 308.2 700.3 309.0 776.8 309.3Z"/>
<path fill="#f4ff58" fill-rule="evenodd" d="M301.2 539.5 778.0 539.5 778.0 497.9 553.3 497.2 496.0 496.1 453.0 494.2 417.1 491.0 402.8 489.0 389.6 486.5 377.5 483.5 366.9 480.0 358.2 476.3 349.4 471.5 342.5 466.8 335.8 460.8 329.9 454.0 324.9 446.5 320.3 437.4 316.7 428.0 313.4 416.7 310.6 403.6 308.2 389.2 306.0 370.8 302.9 329.6 301.0 278.3 300.0 206.3 300.0 539.5 301.2 539.5ZM745.7 305.8 778.0 305.9 778.0 62.5 472.2 62.5 472.7 119.7 473.8 160.3 475.7 191.3 478.5 215.1 482.7 235.4 485.3 243.8 488.6 252.1 492.3 259.3 496.1 265.2 500.8 270.9 505.5 275.7 511.5 280.4 517.7 284.3 524.8 287.9 533.0 291.1 551.0 296.1 573.7 299.9 601.1 302.5 635.8 304.2 681.2 305.3 745.7 305.8Z"/>
<path fill="#ffff4d" fill-rule="evenodd" d="M301.2 539.5 778.0 539.5 778.0 498.5 561.7 497.9 505.5 497.0 463.7 495.5 429.0 493.0 400.4 489.3 388.6 487.0 377.7 484.3 367.4 481.1 358.6 477.5 350.2 473.2 343.0 468.4 336.7 463.2 331.0 457.2 326.3 450.9 321.6 442.9 317.9 434.6 314.3 424.3 311.4 413.1 308.8 400.0 304.8 370.2 301.9 332.0 300.0 282.4 300.0 539.5 301.2 539.5ZM743.3 302.2 778.0 302.3 778.0 62.5 476.6 62.5 477.2 118.5 478.3 157.9 480.3 188.9 483.2 212.8 487.6 233.0 490.2 241.4 493.1 248.5 496.8 255.7 500.7 261.6 505.5 267.6 510.3 272.3 516.3 277.0 522.2 280.7 529.3 284.3 536.6 287.2 554.5 292.3 577.3 296.2 603.5 298.8 638.2 300.6 682.4 301.7 743.3 302.2Z"/>
<path fill="#fff44d" fill-rule="evenodd" d="M301.2 539.5 778.0 539.5 778.0 499.1 570.1 498.5 514.4 497.8 472.1 496.5 435.0 494.2 407.5 491.1 384.8 487.0 374.1 484.1 364.5 480.9 356.2 477.3 347.8 472.8 340.7 467.9 335.2 463.2 329.6 457.2 324.4 450.1 320.4 442.9 316.7 434.6 313.4 425.0 310.8 415.3 308.3 403.6 305.9 389.2 302.4 356.2 300.0 315.6 300.0 539.5 301.2 539.5ZM757.7 298.6 778.0 298.7 778.0 62.5 481.2 62.5 481.8 116.2 482.9 155.5 484.9 185.3 487.8 209.2 492.2 229.5 494.8 237.8 497.7 245.0 501.4 252.1 505.3 258.1 510.1 264.0 515.1 268.9 521.1 273.5 527.1 277.2 534.2 280.8 542.6 284.1 560.8 289.1 584.4 292.9 611.9 295.4 647.7 297.1 693.2 298.1 757.7 298.6Z"/>
<path fill="#ffe94d" fill-rule="evenodd" d="M301.2 539.5 778.0 539.5 778.0 499.6 572.5 499.1 517.5 498.4 475.7 497.2 441.0 495.3 411.1 492.3 387.1 488.2 368.1 483.1 359.7 479.9 351.4 475.9 344.0 471.5 337.6 466.8 331.3 460.8 326.4 454.8 321.7 447.7 318.0 440.5 314.6 432.2 311.5 422.6 308.9 411.9 306.5 400.0 302.7 371.4 300.0 336.9 300.0 539.5 301.2 539.5ZM666.9 293.9 778.0 295.0 778.0 62.5 485.8 62.5 486.4 111.4 487.3 147.2 488.9 174.6 491.2 197.3 494.5 216.3 498.7 231.8 504.3 245.3 507.6 250.9 511.5 256.5 516.1 261.6 521.1 266.3 531.8 273.6 544.9 279.5 560.5 284.2 579.6 287.9 602.3 290.6 631.0 292.6 666.9 293.9Z"/>
<path fill="#ffde4d" fill-rule="evenodd" d="M301.2 539.5 778.0 539.5 778.0 500.2 573.7 499.7 517.5 499.0 476.9 497.8 441.0 495.9 412.3 493.1 389.3 489.4 370.5 484.7 360.9 481.3 352.6 477.6 345.4 473.6 339.0 469.1 333.4 464.4 327.9 458.4 323.4 452.4 319.2 445.3 315.5 437.6 312.2 428.6 307.2 409.1 303.2 384.5 300.0 352.6 300.0 539.5 301.2 539.5ZM681.2 290.3 778.0 291.2 778.0 62.5 490.5 62.5 491.1 110.2 492.1 146.0 493.8 173.4 496.3 196.1 499.8 215.1 504.3 230.6 510.3 243.8 517.5 254.2 526.3 262.8 531.8 266.9 537.8 270.5 544.2 273.6 552.1 276.6 568.9 281.3 589.2 284.8 613.1 287.3 643.0 289.1 681.2 290.3Z"/>
<path fill="#ffd24d" fill-rule="evenodd" d="M301.2 539.5 778.0 539.5 778.0 500.7 576.0 500.3 522.3 499.6 480.4 498.5 443.4 496.7 415.8 494.2 392.0 490.6 372.9 486.2 364.4 483.5 355.5 479.9 347.8 476.0 340.7 471.5 334.7 466.8 329.7 462.0 324.7 456.0 320.3 449.5 316.7 442.8 313.2 434.6 307.8 416.7 303.4 394.0 300.0 364.8 300.0 539.5 301.2 539.5ZM702.7 286.7 778.0 287.3 778.0 62.5 495.3 62.5 495.9 110.2 497.0 144.8 498.8 172.2 501.4 194.9 505.2 213.9 510.2 229.4 513.4 236.6 516.7 242.6 520.9 248.5 524.7 253.0 529.4 257.6 534.6 261.6 540.2 265.2 547.1 268.8 561.7 274.3 579.6 278.6 601.1 281.8 627.4 284.1 659.7 285.7 702.7 286.7Z"/>
<path fill="#ffc74d" fill-rule="evenodd" d="M301.2 539.5 778.0 539.5 778.0 501.3 578.4 500.8 523.5 500.2 482.8 499.2 449.4 497.7 420.7 495.3 395.6 492.0 376.5 487.9 366.9 485.1 358.6 482.1 351.0 478.7 343.0 474.2 337.0 470.0 331.1 464.8 326.2 459.6 321.7 453.6 317.9 447.4 314.3 440.0 310.8 431.0 308.3 422.6 303.6 401.2 300.0 374.9 300.0 539.5 301.2 539.5ZM744.5 283.1 778.0 283.3 778.0 62.5 500.2 62.5 500.9 110.2 502.2 146.0 504.2 173.4 507.2 196.1 511.2 213.9 513.8 222.3 516.8 229.5 520.4 236.6 524.3 242.6 528.2 247.5 533.0 252.4 538.4 256.9 545.0 261.2 551.0 264.3 558.7 267.6 576.0 272.8 596.4 276.6 621.5 279.3 652.5 281.2 692.0 282.4 744.5 283.1Z"/>
<path fill="#ffbc4d" fill-rule="evenodd" d="M301.2 539.5 778.0 539.5 778.0 501.8 579.6 501.4 485.2 499.8 450.6 498.3 421.9 496.1 397.8 493.0 377.7 488.9 359.9 483.5 351.6 479.9 344.8 476.3 338.2 472.0 332.3 467.2 327.0 462.0 322.7 456.7 318.3 450.1 314.5 442.9 308.6 427.4 303.7 407.1 300.0 383.4 300.0 539.5 301.2 539.5ZM696.7 278.4 778.0 279.2 778.0 62.5 505.2 62.5 505.9 106.6 507.1 140.0 508.9 166.2 511.5 187.7 515.0 205.6 519.9 220.9 525.9 233.2 529.4 238.7 533.5 243.8 542.6 252.1 548.6 256.2 554.5 259.5 568.5 265.2 585.6 269.7 605.9 273.1 629.8 275.5 659.7 277.3 696.7 278.4Z"/>
<path fill="#ffb14d" fill-rule="evenodd" d="M301.2 539.5 778.0 539.5 778.0 502.3 583.2 501.9 487.6 500.4 452.2 499.0 423.1 496.8 400.4 494.0 380.1 490.2 361.0 484.6 346.6 478.3 340.6 474.7 334.5 470.3 329.1 465.6 323.7 459.6 319.4 453.6 315.5 447.1 311.9 439.5 309.2 432.2 303.9 413.1 300.0 390.7 300.0 539.5 301.2 539.5ZM745.7 274.8 778.0 275.0 778.0 62.5 510.4 62.5 511.1 107.8 512.5 142.4 514.6 168.6 517.7 190.1 522.0 208.0 527.4 222.3 530.6 228.5 534.4 234.2 539.0 239.9 543.8 244.7 548.6 248.6 554.5 252.5 561.7 256.3 568.7 259.3 584.4 264.1 604.7 268.0 628.6 270.8 658.5 272.8 695.5 274.0 745.7 274.8Z"/>
<path fill="#ffa64d" fill-rule="evenodd" d="M301.2 539.5 778.0 539.5 778.0 502.8 585.6 502.4 490.0 501.0 455.3 499.7 426.7 497.7 401.6 494.8 381.3 491.2 362.1 485.8 347.8 479.8 341.5 476.3 334.7 471.6 329.1 466.8 324.5 462.0 319.8 456.0 316.1 450.1 312.9 444.1 309.6 436.1 304.3 419.1 300.0 397.0 300.0 539.5 301.2 539.5ZM714.7 270.0 778.0 270.6 778.0 62.5 515.6 62.5 516.4 104.2 517.7 136.4 519.6 161.5 522.3 182.1 526.0 199.6 530.9 213.9 536.9 225.9 541.1 231.8 545.2 236.6 549.8 241.0 554.8 245.0 560.5 248.6 567.2 252.1 582.0 257.7 598.8 261.8 619.1 264.9 644.2 267.3 675.2 269.0 714.7 270.0Z"/>
<path fill="#ff9b4d" fill-rule="evenodd" d="M301.2 539.5 778.0 539.5 778.0 503.3 584.4 502.9 490.0 501.6 454.2 500.2 426.7 498.3 401.6 495.4 382.5 492.1 363.4 487.0 348.6 481.1 341.9 477.5 335.9 473.5 330.3 469.1 325.1 464.0 320.4 458.4 316.7 453.0 313.1 446.5 309.8 439.3 304.3 422.6 300.0 402.7 300.0 539.5 301.2 539.5ZM705.1 265.2 778.0 266.2 778.0 62.5 521.0 62.5 521.8 101.9 523.1 132.9 525.0 157.9 527.7 178.2 531.3 194.9 536.1 209.2 542.1 221.1 549.8 231.3 554.5 236.0 559.3 239.9 570.1 246.4 583.9 252.1 599.9 256.5 619.1 259.8 641.8 262.3 669.5 264.0 705.1 265.2Z"/>
<path fill="#ff8f4d" fill-rule="evenodd" d="M301.2 539.5 778.0 539.5 778.0 503.8 586.8 503.4 492.4 502.1 457.7 500.9 428.3 499.0 405.2 496.5 383.7 493.0 364.9 488.2 349.3 482.3 336.7 475.1 330.4 470.3 325.3 465.6 321.1 460.8 316.8 454.8 313.1 448.7 309.8 441.7 304.3 426.2 300.0 407.7 300.0 539.5 301.2 539.5ZM702.7 260.5 778.0 261.6 778.0 62.5 526.6 62.5 527.4 99.5 528.6 129.3 530.5 153.1 533.2 173.4 536.8 190.1 541.6 204.4 547.4 216.0 554.6 225.9 563.5 234.2 568.9 238.0 574.7 241.4 586.8 246.6 602.3 251.1 620.3 254.6 643.0 257.3 669.3 259.2 702.7 260.5Z"/>
<path fill="#ff844d" fill-rule="evenodd" d="M301.2 539.5 778.0 539.5 778.0 504.3 585.6 503.9 492.4 502.7 457.7 501.4 430.3 499.7 406.4 497.2 386.0 494.1 366.5 489.4 350.2 483.5 343.0 479.9 337.0 476.3 332.0 472.7 326.5 467.9 321.9 463.2 317.9 458.1 314.2 452.4 310.4 445.3 304.8 430.8 300.0 412.2 300.0 539.5 301.2 539.5ZM707.5 255.7 778.0 256.8 778.0 62.5 532.3 62.5 533.2 98.3 534.5 126.9 536.5 150.7 539.1 169.8 542.8 186.5 547.4 199.9 553.2 211.6 560.5 221.4 569.1 229.4 574.2 233.0 580.4 236.6 592.8 241.9 608.3 246.5 626.2 249.9 647.7 252.5 674.0 254.4 707.5 255.7Z"/>
<path fill="#ff794d" fill-rule="evenodd" d="M301.2 539.5 778.0 539.5 778.0 504.8 589.2 504.4 494.8 503.2 458.9 502.0 430.3 500.2 406.4 497.8 387.2 494.9 368.1 490.6 351.4 484.8 338.2 478.0 327.5 470.0 322.7 465.3 317.9 459.6 310.8 448.0 304.8 433.6 300.0 416.3 300.0 539.5 301.2 539.5ZM719.4 250.9 778.0 251.8 778.0 62.5 538.3 62.5 539.2 98.3 540.6 125.7 542.6 148.4 545.5 167.4 549.4 184.1 554.2 197.3 560.5 208.8 567.7 217.9 576.8 225.9 588.0 232.5 601.1 237.9 617.9 242.4 635.8 245.5 658.5 248.0 686.0 249.8 719.4 250.9Z"/>
<path fill="#ff6e4d" fill-rule="evenodd" d="M301.2 539.5 778.0 539.5 778.0 505.2 590.4 504.9 495.4 503.7 460.3 502.5 431.5 500.8 407.5 498.5 387.2 495.5 368.1 491.2 352.1 485.8 339.4 479.7 333.5 475.8 327.9 471.5 322.9 466.8 318.7 462.0 314.4 456.0 310.9 450.1 304.8 436.2 300.0 420.1 300.0 539.5 301.2 539.5ZM739.8 246.2 778.0 246.7 778.0 62.5 544.4 62.5 545.4 98.3 547.0 125.7 549.3 148.4 552.3 166.2 556.4 181.8 561.6 194.9 567.9 205.6 571.6 210.4 576.1 215.1 585.6 222.6 597.6 229.1 611.8 234.2 628.6 238.2 648.9 241.3 672.8 243.5 702.7 245.1 739.8 246.2Z"/>
<path fill="#ff634d" fill-rule="evenodd" d="M301.2 539.5 778.0 539.5 778.0 505.7 590.4 505.4 497.2 504.2 462.5 503.1 433.8 501.5 409.9 499.3 389.6 496.5 370.5 492.5 353.8 487.2 340.4 481.1 334.5 477.5 328.7 473.2 323.9 469.0 319.1 463.8 315.0 458.4 311.2 452.4 305.0 439.3 300.0 423.5 300.0 539.5 301.2 539.5ZM719.4 240.2 778.0 241.3 778.0 62.5 550.8 62.5 551.8 94.7 553.3 120.9 555.4 141.2 558.2 159.1 561.7 173.4 566.5 186.6 572.5 197.8 579.6 207.0 588.8 215.1 598.8 221.3 611.9 226.9 626.2 231.1 643.0 234.3 664.5 237.0 689.6 238.9 719.4 240.2Z"/>
<path fill="#ff584d" fill-rule="evenodd" d="M301.2 539.5 778.0 539.5 778.0 506.2 592.8 505.9 498.4 504.8 464.9 503.7 435.0 502.1 411.1 500.0 389.6 497.1 370.0 493.0 354.5 488.2 340.6 482.0 334.7 478.5 328.7 474.2 319.5 465.6 315.5 460.7 311.6 454.8 305.1 441.7 300.0 426.7 300.0 539.5 301.2 539.5ZM756.5 235.4 778.0 235.7 778.0 62.5 557.5 62.5 558.6 94.7 560.3 120.9 562.8 142.4 566.2 160.3 570.9 175.8 576.3 187.7 583.2 198.1 591.6 206.7 601.9 213.9 614.3 219.9 628.6 224.5 645.4 228.1 665.7 230.9 689.6 233.0 719.4 234.5 756.5 235.4Z"/>
<path fill="#ff4d4d" fill-rule="evenodd" d="M301.2 539.5 778.0 539.5 778.0 506.6 590.4 506.3 497.2 505.2 462.5 504.1 434.1 502.5 409.9 500.4 390.4 497.8 372.3 494.2 355.9 489.4 341.8 483.5 329.9 476.1 320.3 467.6 315.5 462.0 311.9 456.9 305.2 444.1 300.0 429.7 300.0 539.5 301.2 539.5ZM752.9 229.5 778.0 229.9 778.0 62.5 564.4 62.5 565.6 92.3 567.3 117.4 569.8 137.6 573.0 154.3 577.2 168.8 583.0 181.8 589.2 191.3 597.6 200.2 607.1 207.2 619.1 213.3 632.2 217.8 648.9 221.7 668.1 224.7 690.8 226.8 718.2 228.4 752.9 229.5Z"/>
<path fill="#f44d4d" fill-rule="evenodd" d="M301.2 539.5 778.0 539.5 778.0 507.1 592.8 506.8 499.6 505.7 464.9 504.7 436.2 503.2 413.5 501.3 392.0 498.6 372.9 494.9 356.2 490.2 342.7 484.6 330.5 477.5 325.1 473.3 320.3 468.8 315.5 463.4 311.9 458.4 305.3 446.5 300.0 432.4 300.0 539.5 301.2 539.5ZM762.5 223.5 778.0 223.8 778.0 62.5 571.7 62.5 572.9 91.1 574.8 115.0 577.3 134.0 580.7 150.7 585.2 165.1 590.4 176.2 597.3 186.5 605.5 194.9 615.5 201.9 627.4 207.8 641.8 212.5 657.3 216.0 676.4 218.8 700.3 221.0 727.8 222.5 762.5 223.5Z"/>
<path fill="#e94d4d" fill-rule="evenodd" d="M301.2 539.5 778.0 539.5 778.0 507.5 592.8 507.2 498.4 506.1 463.7 505.1 437.3 503.7 412.3 501.7 392.0 499.1 372.3 495.4 356.2 490.8 343.0 485.6 331.0 478.7 320.8 470.3 312.6 460.8 305.6 448.9 300.0 435.0 300.0 539.5 301.2 539.5ZM741.0 216.4 778.0 217.3 778.0 62.5 579.3 62.5 580.6 88.7 582.4 110.2 584.8 128.1 588.0 143.8 591.9 156.7 597.2 168.6 603.2 178.2 610.7 186.5 619.8 193.7 629.8 199.2 641.8 203.9 656.1 207.9 671.6 210.8 690.8 213.2 713.5 215.0 741.0 216.4Z"/>
<path fill="#de4d4d" fill-rule="evenodd" d="M301.2 539.5 778.0 539.5 778.0 507.9 594.0 507.7 502.0 506.7 467.3 505.7 438.6 504.3 415.9 502.5 394.4 500.0 375.1 496.6 357.4 491.9 343.0 486.3 331.4 479.9 326.3 476.2 320.9 471.5 312.5 462.0 305.9 451.3 300.0 437.4 300.0 539.5 301.2 539.5ZM772.0 210.4 778.0 210.5 778.0 62.5 587.4 62.5 588.8 87.5 590.8 109.0 593.6 126.9 597.2 142.4 601.9 155.5 607.4 166.2 614.3 175.5 622.1 182.9 632.2 189.8 643.0 194.9 657.3 199.6 672.8 203.0 690.8 205.7 713.5 207.8 739.8 209.4 772.0 210.4Z"/>
<path fill="#d24d4d" fill-rule="evenodd" d="M301.2 539.5 778.0 539.5 778.0 508.4 595.2 508.1 502.0 507.1 466.4 506.1 438.6 504.8 413.5 502.8 393.2 500.3 372.9 496.6 357.4 492.5 343.1 487.0 331.1 480.5 321.1 472.7 312.4 463.2 305.6 452.4 300.0 439.7 300.0 539.5 301.2 539.5ZM774.4 203.2 778.0 203.3 778.0 62.5 596.0 62.5 597.5 86.4 599.7 106.6 602.5 123.3 606.2 137.6 610.7 149.8 616.4 160.3 622.7 168.6 631.0 176.5 640.6 182.8 651.3 187.9 664.5 192.2 680.0 195.8 697.9 198.5 719.4 200.6 744.5 202.2 774.4 203.2Z"/>
<path fill="#c74d4d" fill-rule="evenodd" d="M301.2 539.5 778.0 539.5 778.0 508.8 594.0 508.5 503.2 507.6 468.5 506.6 439.8 505.3 417.1 503.6 395.6 501.2 375.5 497.8 358.6 493.5 344.2 488.2 332.3 482.0 321.5 474.1 313.1 465.3 306.0 454.7 300.0 441.9 300.0 539.5 301.2 539.5ZM757.7 194.9 778.0 195.6 778.0 62.5 605.1 62.5 606.6 82.8 608.6 100.7 611.3 116.2 614.6 129.3 618.9 141.2 623.8 150.7 629.8 159.3 637.0 166.7 645.4 173.0 654.9 178.2 666.9 182.9 680.0 186.5 694.4 189.3 712.3 191.7 733.8 193.6 757.7 194.9Z"/>
<path fill="#bc4d4d" fill-rule="evenodd" d="M301.2 539.5 778.0 539.5 778.0 509.2 594.0 508.9 502.0 508.0 439.8 505.7 414.7 503.9 394.4 501.5 375.3 498.3 358.6 494.1 344.2 488.9 331.3 482.3 321.6 475.1 313.1 466.5 305.9 456.0 300.0 443.9 300.0 539.5 301.2 539.5ZM758.9 186.6 778.0 187.4 778.0 62.5 614.8 62.5 616.5 81.6 618.7 98.3 621.5 112.6 624.9 124.5 629.1 135.2 634.3 144.8 639.6 151.9 646.7 159.1 654.9 165.2 664.5 170.4 675.2 174.6 687.2 178.0 701.5 181.0 717.1 183.2 736.2 185.1 758.9 186.6Z"/>
<path fill="#b14d4d" fill-rule="evenodd" d="M301.2 539.5 778.0 539.5 778.0 509.6 519.9 508.9 472.1 507.8 443.4 506.6 424.3 505.3 400.4 502.9 377.7 499.4 362.1 495.8 347.8 491.1 334.7 485.0 323.3 477.5 314.3 469.0 309.6 463.2 305.7 457.2 300.0 445.8 300.0 539.5 301.2 539.5ZM772.0 178.2 778.0 178.5 778.0 62.5 625.4 62.5 627.3 80.4 629.7 95.9 632.7 109.0 636.1 119.7 640.3 129.3 645.4 138.0 651.3 145.5 658.5 152.2 666.8 157.9 676.2 162.7 687.2 166.8 699.1 170.0 713.5 172.8 730.2 175.1 749.3 176.9 772.0 178.2Z"/>
<g stroke="#000" stroke-opacity="0.045" stroke-width="1">
<path d="M419.5 62V540M539 62V540M658.5 62V540M300 420.5H778M300 301H778M300 181.5H778"/>
</g>
<path d="M300.5 62V540M300 539.5H778" stroke="#000" stroke-opacity="0.22" stroke-width="1"/>
<path d="M419.5 540v-4.5M539 540v-4.5M658.5 540v-4.5M300 420.5h4.5M300 301h4.5M300 181.5h4.5" stroke="#000" stroke-opacity="0.45" stroke-width="1"/>
<path fill="none" stroke="#800000" stroke-width="1" d="M778.0 510.9 433.8 510.9 429.1 506.1 390.8 506.1 386.0 501.3 366.9 501.3 362.1 496.6 352.6 496.6 347.8 491.8 338.2 491.8 328.7 482.3 323.9 482.3 304.8 463.2 304.8 458.4 300.0 453.6 300.0 448.9M639.4 62.5 639.4 76.8 644.2 81.6 644.2 100.7 648.9 105.4 648.9 115.0 653.7 119.7 653.7 124.5 677.6 148.4 682.4 148.4 687.2 153.1 696.7 153.1 701.5 157.9 715.9 157.9 720.6 162.7 754.1 162.7 758.9 167.4 778.0 167.4"/>
<path fill="none" stroke="#df0000" stroke-width="1" d="M778.0 508.0 591.6 507.8 510.3 506.9 457.7 505.0 419.5 502.8 409.9 501.8 381.3 497.7 362.1 493.0 347.8 488.0 336.1 482.3 328.6 477.5 322.8 472.7 318.0 467.9 313.9 463.2 310.6 458.4 304.8 448.1 300.0 436.1M583.2 62.5 584.4 86.3 586.5 110.2 589.3 129.3 592.5 143.6 596.4 155.4 599.5 162.7 602.0 167.4 605.0 172.2 608.6 177.0 612.9 181.8 618.2 186.5 624.9 191.3 629.8 194.1 639.4 198.5 645.9 200.8 653.7 203.1 663.3 205.4 672.8 207.2 692.0 209.7 715.9 211.7 744.5 213.1 778.0 214.1"/>
<path fill="none" stroke="#ff3000" stroke-width="1" d="M778.0 505.2 596.4 504.9 543.8 504.5 500.8 503.8 467.3 502.7 438.6 501.3 414.7 499.2 390.8 496.1 370.4 491.8 355.2 487.0 343.0 481.6 336.0 477.5 329.4 472.7 324.1 467.9 319.1 462.5 314.3 455.8 310.3 448.9 304.8 436.1 300.0 420.0M544.3 62.5 545.4 100.7 547.1 129.3 548.5 143.6 549.8 153.1 551.4 162.7 553.3 171.7 556.2 181.8 558.1 187.4 561.9 196.1 564.5 200.8 567.7 205.7 572.5 211.7 575.8 215.1 581.4 219.9 586.8 223.6 591.6 226.4 598.0 229.4 605.9 232.5 615.5 235.4 625.0 237.6 644.2 240.8 668.1 243.3 696.7 245.0 730.2 246.1 778.0 246.8"/>
<path fill="none" stroke="#ff8f00" stroke-width="1" d="M778.0 502.5 582.0 502.1 529.4 501.6 491.2 500.8 453.0 499.2 424.3 497.1 400.4 494.2 386.0 491.8 381.3 490.7 367.0 487.0 362.1 485.3 354.1 482.3 344.5 477.5 338.2 473.5 333.5 469.9 328.7 465.6 323.9 460.4 319.1 454.0 316.0 448.9 313.6 444.1 309.5 434.6 304.8 418.7 302.1 405.9 300.0 393.6M512.8 62.5 513.6 110.2 515.1 143.6 516.2 157.9 517.7 172.2 520.7 191.3 522.9 200.8 525.8 210.4 529.4 219.5 532.0 224.7 534.9 229.4 539.0 235.1 543.8 240.4 548.6 244.7 553.7 248.5 562.0 253.3 573.2 258.1 582.0 260.8 591.6 263.2 601.1 265.1 615.5 267.2 629.8 268.7 644.2 269.8 677.6 271.5 720.6 272.5 778.0 273.0"/>
<path fill="none" stroke="#ffdf00" stroke-width="1" d="M778.0 499.5 567.7 499.0 510.3 498.1 467.3 496.8 433.8 494.6 407.7 491.8 395.6 489.8 382.1 487.0 366.0 482.3 354.6 477.5 347.8 473.8 339.2 467.9 333.8 463.2 329.3 458.4 325.6 453.6 322.5 448.9 317.6 439.3 313.8 429.8 311.0 420.2 308.7 410.7 306.0 396.4 304.6 386.9 302.5 367.8 300.0 335.9M485.6 62.5 486.3 119.7 487.6 157.9 489.7 186.5 491.2 199.3 493.0 210.4 495.0 219.9 497.6 229.4 500.8 238.2 503.3 243.8 505.8 248.5 508.8 253.3 512.4 258.1 516.8 262.8 522.3 267.6 529.2 272.4 534.2 275.2 543.8 279.4 551.1 281.9 562.9 285.0 570.9 286.7 582.0 288.5 596.4 290.2 625.0 292.4 663.3 293.9 711.1 294.8 778.0 295.2"/>
<path fill="none" stroke="#bfff40" stroke-width="1" d="M778.0 496.3 629.8 496.1 548.6 495.5 486.4 494.1 443.1 491.8 424.3 489.9 405.2 487.4 395.6 485.6 381.2 482.3 367.0 477.5 357.4 473.1 348.8 467.9 342.6 463.2 337.6 458.4 333.4 453.6 330.0 448.9 324.6 439.3 320.7 429.8 317.7 420.2 314.2 405.9 311.8 391.6 309.3 372.5 307.2 348.7 305.7 324.9 304.8 304.2 303.9 272.4 303.0 196.1 302.6 62.5M460.9 62.5 461.4 124.5 462.5 167.4 464.5 200.8 466.0 215.1 467.3 224.7 469.0 234.2 472.1 246.6 474.2 253.3 478.2 262.8 481.6 269.3 486.4 276.3 491.4 281.9 496.7 286.7 503.5 291.5 510.3 295.3 515.1 297.5 524.7 301.0 534.2 303.7 543.8 305.8 558.1 308.2 572.5 309.9 586.8 311.1 605.9 312.3 644.2 313.6 696.7 314.4 778.0 314.7"/>
<path fill="none" stroke="#70ff8f" stroke-width="1" d="M778.0 492.7 629.8 492.5 544.6 491.8 486.4 490.2 462.5 489.0 443.4 487.7 424.3 485.7 405.2 482.8 395.6 480.7 383.2 477.5 370.1 472.7 362.1 468.8 353.2 463.2 347.4 458.4 342.8 453.6 338.9 448.9 335.7 444.1 333.0 439.3 330.7 434.6 327.1 425.0 323.9 414.2 320.3 396.4 318.2 382.1 316.2 363.0 314.3 341.2 313.2 320.1 311.3 262.8 310.3 186.5 309.9 62.5M437.3 62.5 437.7 134.0 438.7 181.8 440.5 215.1 441.8 229.4 443.4 241.5 445.5 253.3 447.8 262.8 450.8 272.4 454.9 281.9 457.4 286.7 460.5 291.5 464.2 296.2 468.7 301.0 474.3 305.8 481.5 310.5 486.4 313.2 496.0 317.2 505.5 320.3 515.1 322.7 526.4 324.9 539.0 326.6 553.3 328.2 586.8 330.3 629.8 331.6 687.2 332.2 778.0 332.4"/>
<path fill="none" stroke="#10ffef" stroke-width="1" d="M778.0 488.5 629.8 488.3 548.6 487.6 496.0 486.3 472.1 485.1 453.0 483.8 436.5 482.3 414.7 479.1 405.2 477.3 388.1 472.7 375.7 467.9 366.9 463.3 359.8 458.4 354.3 453.6 347.8 446.2 343.2 439.3 338.6 429.8 335.3 420.2 332.8 410.7 330.2 396.4 328.2 382.1 326.3 363.0 324.5 339.2 323.4 320.1 321.3 258.1 320.2 181.8 319.8 62.5M413.1 62.5 413.4 143.6 414.2 191.3 415.6 224.7 416.6 239.0 418.2 253.3 420.5 267.6 422.6 277.1 425.3 286.7 429.1 296.2 433.8 305.2 437.5 310.5 441.6 315.3 448.2 321.4 453.0 324.9 462.5 330.3 472.1 334.3 481.6 337.3 491.2 339.6 500.8 341.4 515.1 343.5 529.4 344.9 562.9 347.0 610.7 348.3 672.8 348.8 778.0 349.0"/>
<path fill="none" stroke="#00bfff" stroke-width="1" d="M778.0 483.7 634.6 483.5 553.3 482.7 528.6 482.3 500.8 481.3 476.9 480.0 457.7 478.6 438.6 476.6 419.5 473.6 409.9 471.5 397.0 467.9 384.8 463.2 376.5 458.7 369.2 453.6 363.9 448.9 359.7 444.1 356.3 439.3 352.6 432.4 349.6 425.0 347.8 419.4 345.9 410.7 344.3 401.2 342.9 386.9 341.7 363.0 338.1 243.8 337.1 167.4 336.5 62.5M383.6 62.5 383.6 157.9 384.1 205.6 384.7 224.7 385.6 243.8 386.7 258.1 388.3 272.4 389.8 281.9 393.1 296.2 396.2 305.8 398.1 310.5 403.1 320.1 406.3 324.9 410.2 329.6 414.7 334.2 419.5 338.2 428.3 343.9 433.8 346.7 443.4 350.6 453.0 353.5 462.5 355.8 476.9 358.4 491.2 360.2 505.5 361.5 524.7 362.7 543.8 363.5 591.6 364.5 658.5 364.9 778.0 365.0"/>
<path fill="none" stroke="#0060ff" stroke-width="1" d="M778.0 477.9 615.5 477.5 539.0 476.3 500.8 474.9 472.1 473.1 453.0 471.1 433.8 468.3 424.3 466.3 412.3 463.2 400.4 458.8 390.2 453.6 383.5 448.9 378.4 444.1 374.5 439.3 371.5 434.6 369.3 429.8 367.6 425.0 366.5 420.2 365.5 410.7 366.0 401.2 366.9 395.6 369.8 386.9 371.7 382.9 376.5 377.0 381.3 373.8 386.0 372.1 390.8 371.4 395.6 371.2 405.2 371.8 438.6 375.8 462.5 377.8 486.4 379.2 510.3 380.0 543.8 380.6 591.6 380.9 778.0 381.0"/>
<path fill="none" stroke="#0010ff" stroke-width="1" d="M778.0 470.1 639.4 469.7 558.1 468.6 534.2 468.0 510.3 466.7 486.4 465.0 468.5 463.2 453.0 460.7 441.5 458.4 425.8 453.6 415.4 448.9 408.4 444.1 403.7 439.3 400.6 434.6 399.0 429.8 398.7 425.0 399.8 420.2 402.6 415.5 405.2 412.9 409.9 409.5 418.0 405.9 424.3 404.2 433.8 402.5 448.2 401.0 476.9 399.6 529.4 398.8 629.8 398.2 778.0 397.9"/>
<path fill="none" stroke="#0000af" stroke-width="1" d="M778.0 457.5 692.0 457.1 629.8 456.5 582.0 455.4 542.4 453.6 519.9 451.4 500.8 448.9 486.4 445.1 482.9 444.1 475.5 439.3 475.4 434.6 483.7 429.8 491.2 427.9 500.8 426.1 515.1 424.3 543.8 422.3 577.2 420.9 620.3 420.0 687.2 419.5 778.0 419.1"/>
<path fill="none" stroke="#000" stroke-width="5.0" stroke-linejoin="round" stroke-linecap="butt" d="M728.9 480.6 726.6 478.5 724.3 476.5 722.0 474.4 719.7 472.3 717.5 470.3 715.2 468.2 713.0 466.1 710.8 464.0 708.6 461.9 706.4 459.8 704.2 457.8 702.0 455.7 699.8 453.6 697.7 451.5 695.5 449.4 693.4 447.3 691.2 445.2 689.1 443.0 687.0 440.9 684.9 438.8 682.8 436.7 680.7 434.6 678.5 432.5 676.4 430.4 674.4 428.3 672.3 426.2 670.2 424.1 668.1 422.0 666.0 419.9 663.9 417.8 661.8 415.7 659.7 413.6 657.6 411.5 655.6 409.4 653.5 407.3 651.4 405.2 649.3 403.1 647.2 401.0 645.1 398.9 643.0 396.8 640.9 394.8 638.7 392.7 636.6 390.6 634.5 388.6 632.4 386.5 630.2 384.4 628.1 382.4 625.9 380.3 623.7 378.3 621.6 376.3 619.4 374.2 617.2 372.2 615.0 370.2 612.7 368.2 610.5 366.2 608.2 364.2 606.0 362.3 603.7 360.3 601.4 358.4 599.1 356.5 596.8 354.6 594.4 352.8 592.1 350.9 589.7 349.1 587.3 347.3 584.8 345.6 582.4 343.8 579.9 342.1 577.4 340.4 574.9 338.8 572.4 337.2 569.8 335.6 567.2 334.1 564.6 332.6 565.9 335.3 567.2 338.1 568.6 340.7 570.0 343.4 571.5 346.0 573.0 348.6 574.5 351.2 576.0 353.8 577.6 356.3 579.2 358.9 580.9 361.4 582.5 363.8 584.2 366.3 586.0 368.8 587.7 371.2 589.5 373.6 591.3 376.0 593.1 378.4 594.9 380.8 596.8 383.2 598.6 385.5 600.5 387.9 602.4 390.2 604.4 392.5 606.3 394.8 608.2 397.1 610.2 399.4 612.2 401.7 614.1 404.0 616.1 406.3 618.1 408.6 620.1 410.9 622.1 413.2 624.1 415.4 626.2 417.7 628.2 420.0 630.2 422.3 632.2 424.6 634.2 426.9 636.2 429.1 638.2 431.4 640.2 433.7 642.2 436.1 644.2 438.4 646.2 440.7 648.2 443.0 650.2 445.4 652.1 447.7 654.1 450.1 656.0 452.5 657.9 454.9 659.8 457.3 661.7 459.7 663.5 462.1 665.4 464.6 667.2 467.1 669.0 469.5 670.8 472.1 672.6 474.6 674.3 477.1 676.0 479.7 677.7 482.3 679.4 484.9 681.0 487.5 682.6 490.2 680.2 488.4 677.8 486.5 675.4 484.6 673.1 482.7 670.8 480.8 668.5 478.8 666.2 476.9 663.9 474.9 661.6 472.9 659.4 470.9 657.1 468.9 654.9 466.8 652.7 464.8 650.5 462.8 648.3 460.7 646.1 458.6 643.9 456.6 641.8 454.5 639.6 452.4 637.4 450.3 635.3 448.3 633.1 446.2 630.9 444.1 628.8 442.0 626.6 439.9 624.4 437.8 622.3 435.7 620.1 433.7 617.9 431.6 615.7 429.5 613.6 427.5 611.4 425.4 609.2 423.3 607.0 421.3 604.8 419.3 602.6 417.2 600.3 415.2 598.1 413.2 595.9 411.1 593.7 409.1 591.4 407.1 589.2 405.1 587.0 403.1 584.7 401.1 582.5 399.2 580.3 397.2 578.0 395.2 575.8 393.3 573.5 391.3 571.3 389.4 569.0 387.4 566.7 385.5 564.5 383.6 562.2 381.6 560.0 379.7 557.7 377.8 555.4 375.9 553.2 374.1 550.9 372.2 548.6 370.3 546.3 368.4 544.0 366.5 541.7 364.7 539.4 362.8 537.1 360.9 534.8 359.0 532.5 357.1 530.1 355.3 527.8 353.4 525.4 351.5 523.1 349.5 520.7 347.6 518.3 345.7 515.8 343.7 513.4 341.8 511.0 339.9 508.5 338.0 506.0 336.2 503.5 334.4 500.9 332.7 498.3 331.1 495.7 329.6 493.1 328.1 490.4 326.8 487.7 325.5 485.0 324.4 482.2 323.5 479.3 322.7 476.5 322.0 473.6 321.5 470.6 321.1 467.7 320.8 464.7 320.6 461.7 320.5 458.7 320.5 455.6 320.6 452.6 320.7 449.5 320.8 446.5 321.1 443.4 321.3 440.3 321.5 437.3 321.8 434.2 322.0 431.2 322.3 428.2 322.5 425.1 322.7 422.1 323.0 419.1 323.2 416.1 323.5 413.1 323.7 410.0 323.9 407.0 324.2 404.1 324.4 401.1 324.6 398.1 324.8 395.1 325.0 392.1 325.2 389.1 325.4 386.2 325.6 383.2 325.7 380.2 325.9 377.3 326.0 374.3 326.2 371.3 326.3 368.3 326.4 365.3 326.6 362.3 326.7 359.3 326.8 356.2 326.9 353.1 327.1 349.9 327.2 346.7 327.4 343.5 327.7 340.4 328.2 337.4 328.9 334.6 330.1 332.1 331.6 329.8 333.6 328.2 335.9 327.4 338.5 327.5 341.1 328.3 343.8 329.7 346.5 331.2 349.2 332.9 351.8 334.6 354.4 336.3 356.9 338.1 359.3 339.9 361.7 341.8 364.0 343.8 366.3 345.8 368.5 347.8 370.7 349.8 372.9 351.9 375.0 354.1 377.1 356.2 379.2 358.4 381.2 360.6 383.3 362.8 385.3 365.1 387.3 367.3 389.3 369.6 391.2 371.9 393.2 374.1 395.2 376.4 397.2 378.7 399.2 381.0 401.2 383.3 403.1 385.7 405.1 388.0 407.1 390.3 409.1 392.6 411.1 394.9 413.1 397.3 415.1 399.6 417.0 401.9 419.0 404.2 421.0 406.6 422.9 408.9 424.9 411.2 426.9 413.5 428.8 415.8 430.8 418.1 432.7 420.4 434.6 422.7 436.6 425.0 438.5 427.3 440.4 429.6 442.3 431.9 444.2 434.1 446.0 436.4 447.9 438.6 449.8 440.9 451.6 443.1 453.5 445.3 455.3 447.5 457.1 449.7 458.9 451.9 460.7 454.1 462.4 456.2 464.2 458.4 466.0 460.6 467.7 462.9 469.5 465.2 471.3 467.5 473.1 469.9 474.9 472.3 476.7 474.8 478.5 477.4 480.2 480.0 481.8 482.7 483.2 485.5 484.3 488.3 485.1 491.2 485.6 490.6 482.7 489.9 479.8 489.1 477.0 488.2 474.2 487.2 471.4 486.1 468.6 485.0 465.9 483.8 463.1 482.5 460.4 481.2 457.8 479.9 455.1 478.5 452.4 477.0 449.8 475.5 447.1 474.0 444.5 472.5 441.9 470.9 439.3 469.4 436.7 467.8 434.1 466.2 431.4 464.6 428.8 463.1 426.2 461.5 423.6 460.0 420.9 458.5 418.3 457.0 415.6 455.6 413.0 454.2 410.3 452.8 407.6 451.5 404.9 450.2 402.2 449.0 399.4 447.8 396.7 446.6 393.9 445.4 391.1 444.3 388.4 443.1 385.6 442.0 382.8 440.9 380.0 439.8 377.2 438.7 374.4 437.7 371.6 436.6 368.8 435.5 366.0 434.4 363.2 433.3 360.3 432.2 357.5 431.1 354.7 430.0 351.9 428.9 349.1 427.7 346.3 426.5 343.6 425.3 340.8 424.0 338.0 422.8 335.3 421.5 332.5 420.1 329.8 418.8 327.1 417.4 324.4 416.0 321.7 414.5 319.0 413.1 316.3 411.6 313.7 410.0 311.1 408.5 308.5 406.9 305.9 405.3 303.3 403.6 300.8 401.9 298.3 400.2 295.8 398.5 293.3 396.7 290.9 394.9 288.4 393.1 286.1 391.3 283.7 389.4 281.4 387.5 279.1 385.6 276.8 383.6 274.6 381.6 272.4 379.6 270.2 377.6 268.1 375.5 266.0 373.4 263.9 371.3 261.9 369.1 259.8 367.0 257.8 364.8 255.8 362.6 253.8 360.4 251.7 358.2 249.7 355.9 247.6 353.7 245.6 351.4 243.5 349.1 241.3 346.9 239.2 344.6 237.0 342.3 234.8 340.0 232.5 337.7 230.2 335.4 227.8 333.2 225.3 331.1 222.8 329.2 220.3 327.5 217.7 326.1 215.1 325.1 212.5 324.5 209.8 324.3 207.3 324.7 204.8 325.5 202.5 326.9 200.5 328.8 198.7 331.0 197.2 333.4 196.0 336.0 195.0 338.7 194.3 341.5 193.9 344.4 193.6 347.4 193.5 350.4 193.6 353.5 193.7 356.7 193.9 359.9 194.0 363.2 194.2 366.5 194.3 369.9 194.3 373.3 194.1 376.8 193.8 380.2 193.4 383.5 192.8 386.7 192.1 389.8 191.2 392.7 190.1 395.4 188.8 397.9 187.4 400.0 185.8 401.8 183.9 403.3 181.9 404.4 179.7 405.0 177.2 405.3 174.6 405.3 171.9 405.0 169.1 404.4 166.3 403.7 163.5 402.8 160.7 401.7 157.9 400.5 155.3 399.2 152.7 397.8 150.1 396.4 147.6 394.8 145.2 393.1 142.8 391.4 140.5 389.5 138.2 387.7 136.0 385.7 133.8 383.7 131.6 381.7 129.5 379.6 127.3 377.5 125.2 375.4 123.1 373.2 121.1 371.0 119.0 368.9 116.9 366.7 114.9 364.5 112.8 362.3 110.8 360.1 108.7 358.0 106.6 355.8 104.5 353.7 102.4 351.6 100.3 349.5 98.2 347.4 96.0 345.4 93.8 343.3 91.6 341.4 89.4 339.4 87.2 337.5 84.9 335.6 82.6 333.8 80.2 332.1 77.8 330.3 75.4 328.7 72.9 327.1 70.4 325.5 67.9 324.0 65.3 322.6 62.6"/>
</g>
<g font-family="Liberation Sans" font-size="11.5" letter-spacing="0.2" fill="#2a2a2a">
<text x="295" y="545.2" text-anchor="end">0.5</text>
<text x="295" y="426" text-anchor="end">1</text>
<text x="295" y="306.7" text-anchor="end">1.5</text>
<text x="295" y="187.5" text-anchor="end">2</text>
<text x="295" y="68.2" text-anchor="end">2.5</text>
<text x="299.6" y="556.8" text-anchor="middle">0.5</text>
<text x="419.2" y="556.8" text-anchor="middle">1</text>
<text x="538.8" y="556.8" text-anchor="middle">1.5</text>
<text x="658.4" y="556.8" text-anchor="middle">2</text>
<text x="778" y="556.8" text-anchor="middle">2.5</text>
</g>
<g font-family="Liberation Serif" font-size="14.3" letter-spacing="0.1" fill="#303030">
<text x="539" y="572.5" text-anchor="middle">A-B bond distance (Å)</text>
<text transform="translate(271 301) rotate(-90)" text-anchor="middle">B-C bond distance (Å)</text>
</g>
</svg>
</body></html>
